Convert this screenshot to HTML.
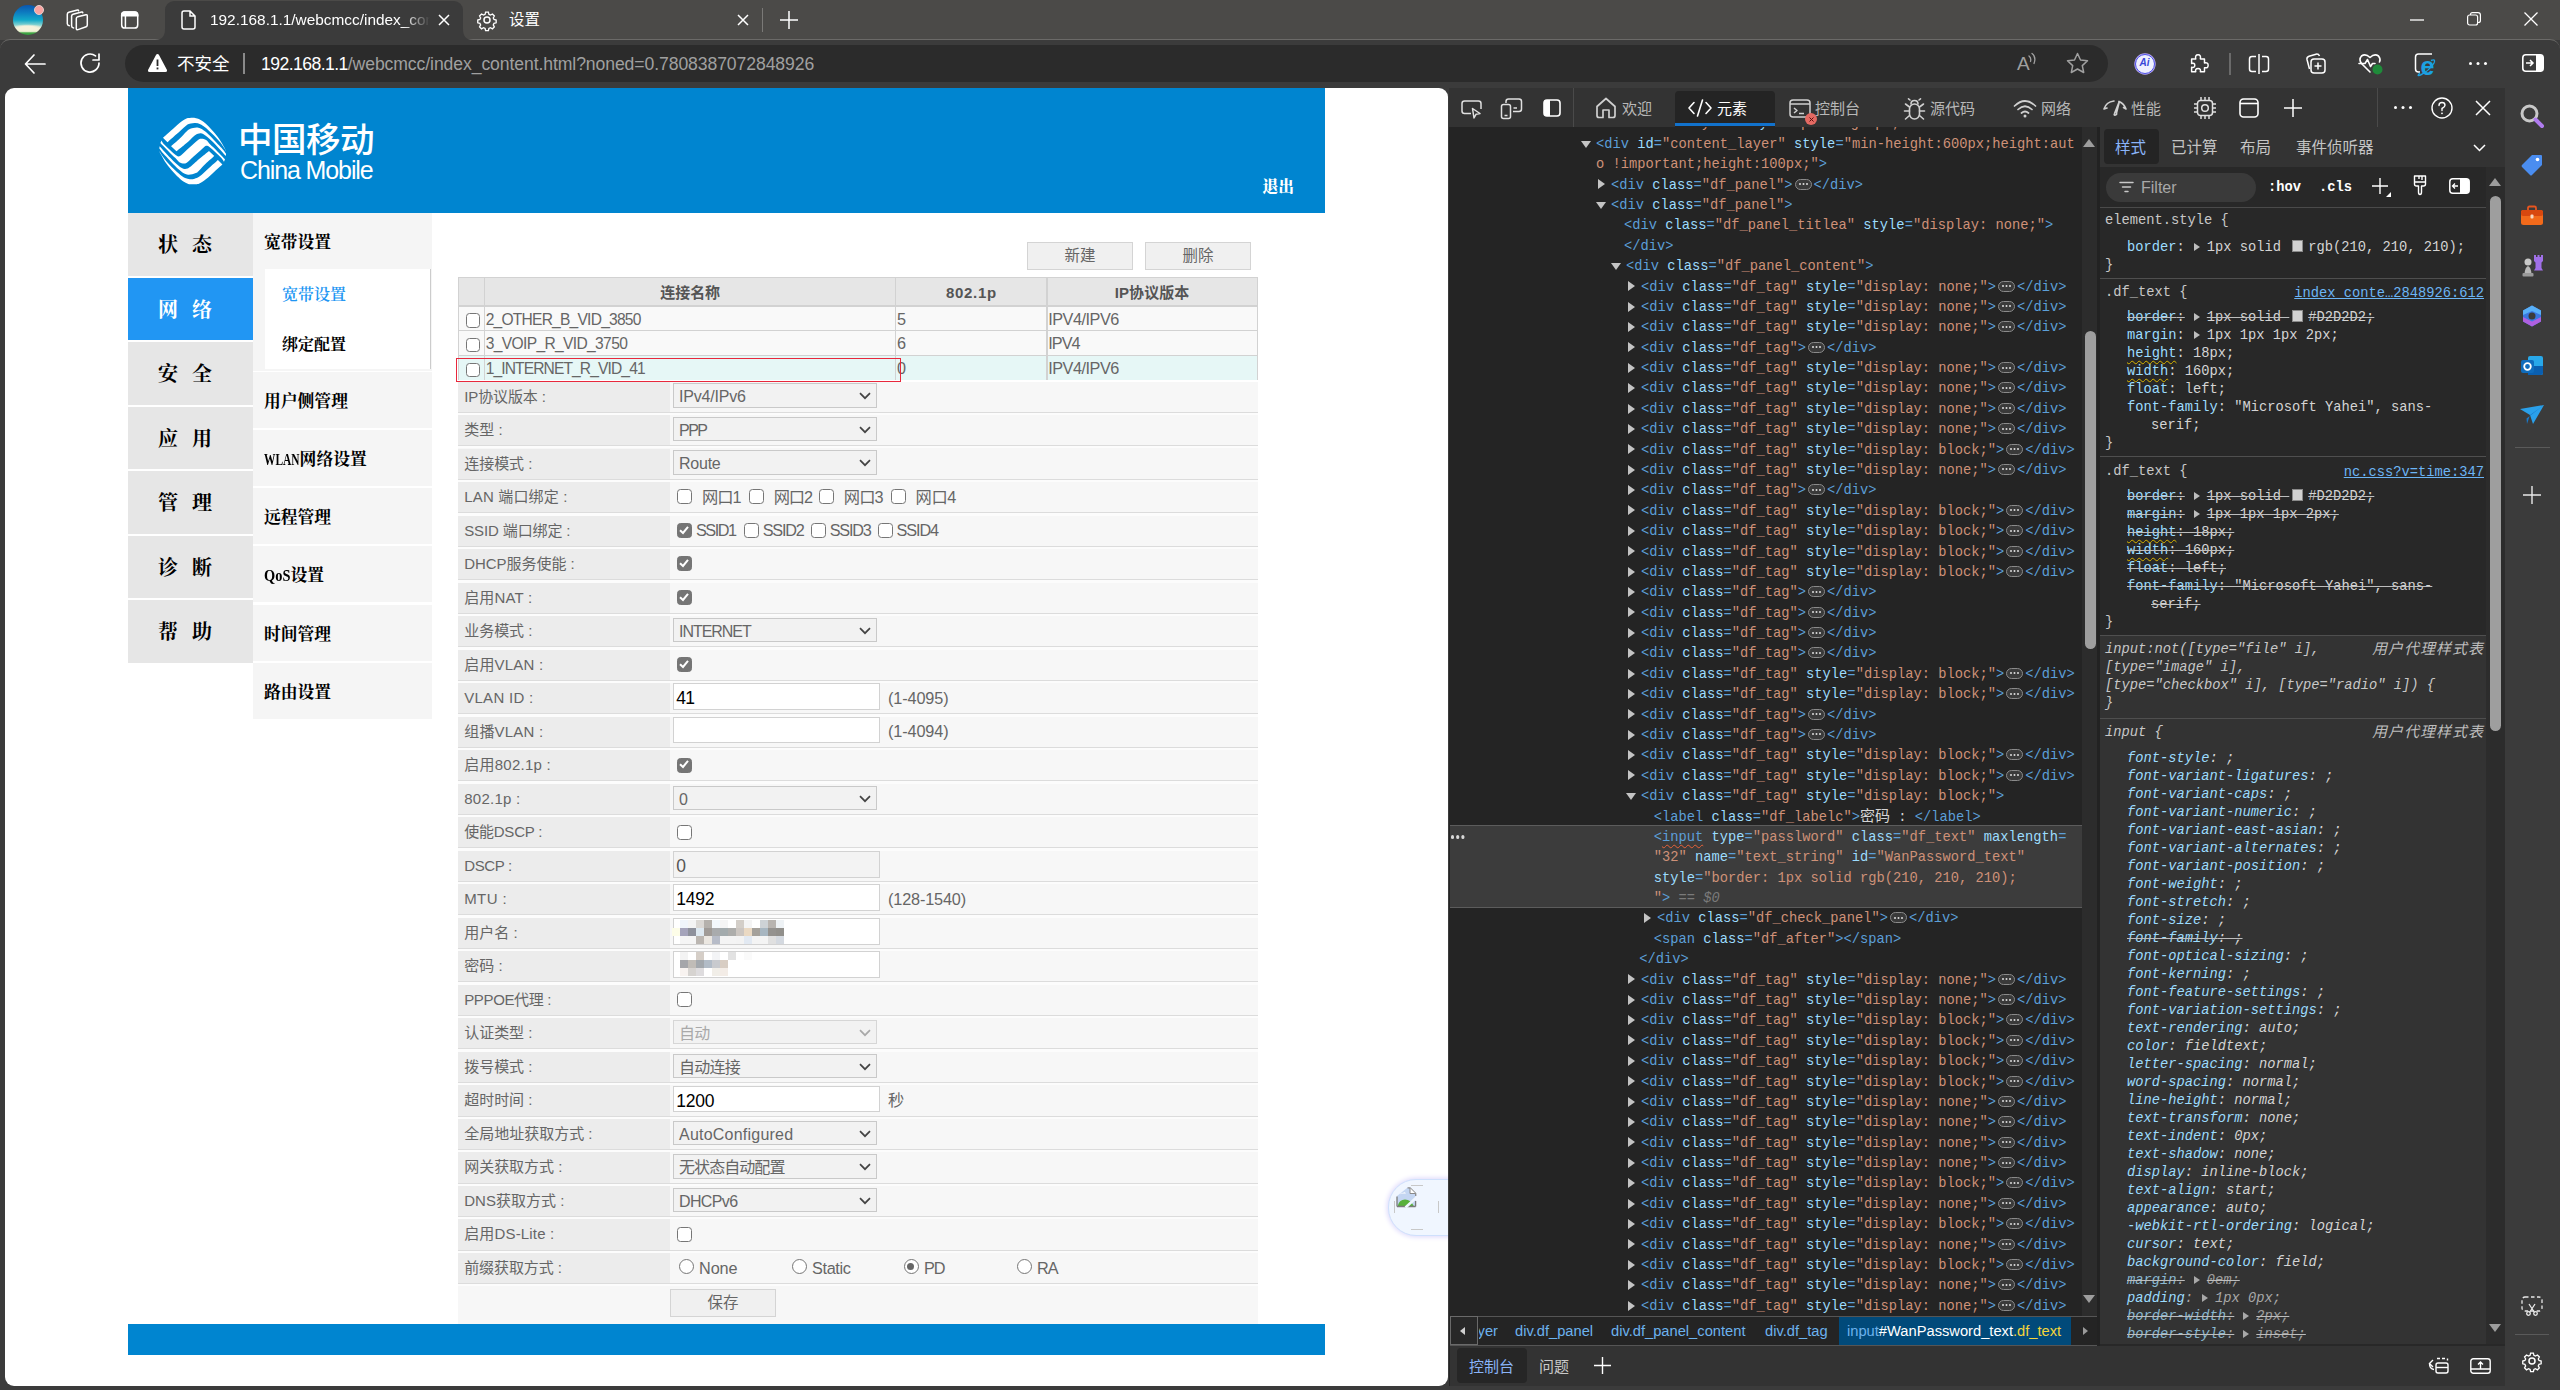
<!DOCTYPE html><html lang="zh-CN"><head><meta charset="utf-8"><title>192.168.1.1/webcmcc/index_content.html</title><style>
*{box-sizing:border-box;margin:0;padding:0}
html,body{width:2560px;height:1390px;overflow:hidden;background:#3b3b3b}
body{position:relative;font-family:"Liberation Sans","Noto Sans CJK SC",sans-serif;font-size:15px;color:#fff}
.abs{position:absolute}
svg{position:absolute;overflow:visible}
/* ---------- browser chrome ---------- */
#titlebar{left:0;top:0;width:2560px;height:40px;background:#4b4a48}
#toolbar{left:0;top:39px;width:2560px;height:49px;background:#3b3b3b;border-top:1px solid #6b6a68;border-top-left-radius:10px;border-top-right-radius:10px}
#tab1{left:165px;top:1px;width:298px;height:39px;background:#3b3b3b;border-radius:9px 9px 0 0}
.tabt{font-size:15.4px;color:#fff;white-space:nowrap}
#addr{left:125px;top:45px;width:1983px;height:37px;border-radius:19px;background:#2b2b2b}
.url{font-size:17.6px;white-space:nowrap;top:53px;line-height:22px}
/* ---------- web page ---------- */
#page{left:5px;top:88px;width:1443px;height:1298px;background:#fff;border-radius:9px 9px 9px 9px;overflow:hidden}
#hdr{left:123px;top:0;width:1197px;height:125px;background:#0085d0}
.serif{font-family:"Liberation Serif","Noto Serif CJK SC",serif;font-weight:700}
.nav{left:123px;width:125px;height:62.5px;background:#e6e6e6;color:#000;font-size:20px;text-align:left;padding-left:30px;line-height:64.500px;white-space:pre}
.sub{left:248px;width:179px;height:56px;background:#f5f5f5;color:#000;font-size:16.8px;line-height:59px;padding-left:11px;white-space:nowrap}
.row{left:453px;width:799.6px;height:31.3px;background:#f7f7f7;border-bottom:1px solid #dcdcdc}
.row .lab{position:absolute;left:0;top:0;width:212px;height:30.3px;background:#ececec;color:#666;font-size:15px;line-height:30px;padding-left:6.2px;white-space:nowrap}
.t{color:#666;font-size:16.2px;white-space:nowrap;line-height:20px}
.sel{position:absolute;left:215px;top:1.9px;width:204px;height:24.4px;border:1px solid #c9c9c9;background:#f2f2f2;color:#666;font-size:16.2px;line-height:24px;padding-left:5px;white-space:nowrap}
.sel.dis{color:#a9a9a9;border-color:#d6d6d6}
.inp{position:absolute;left:214.8px;top:0.3px;width:207px;height:26.6px;border:1px solid #d2d2d2;background:#fff;color:#000;font-size:17.5px;line-height:28px;padding-left:2.5px;white-space:nowrap}
.cb{position:absolute;width:15px;height:15px;border:1.6px solid #767676;border-radius:3.5px;background:#fff}
.cb.on{background:#757575;border-color:#757575}
.rd{position:absolute;width:15px;height:15px;border:1.6px solid #767676;border-radius:50%;background:#fff}
.btn{background:#f0f0f0;border:1px solid #d4d4d4;color:#666;font-size:15.5px;text-align:center;line-height:25px;height:27.5px}
/* ---------- devtools ---------- */
#dt{left:1450px;top:88px;width:1055px;height:1298px;background:#282828;overflow:hidden}
.mono{font-family:"Liberation Mono","Noto Sans CJK SC",monospace;font-size:13.75px;white-space:pre}
.ln{position:absolute;height:20.4px;line-height:20.4px}
.tg{color:#5c9fd8}.an{color:#9cdcfe}.av{color:#ce9178}.tx{color:#d4d4d4}
.ar{position:absolute;width:0;height:0}
.el{display:inline-block;width:17px;height:11px;border:1px solid #8a8a8a;border-radius:6px;background:#3a3a3a;vertical-align:-1px;margin:0 2px;position:relative}
.el:after{content:"";position:absolute;left:3px;top:3.5px;width:2px;height:2px;background:#ddd;box-shadow:3.5px 0 0 #ddd,7px 0 0 #ddd;border-radius:1px}
.sl{position:absolute;height:18px;line-height:18px}
.pn{color:#9cdcfe}.pv{color:#d4d4d4}.sc{color:#c8c8c8}
.ua{font-style:italic}
.st{text-decoration:line-through;text-decoration-color:#bdbdbd}
.dtab{position:absolute;top:8.600px;height:24px;line-height:24px;font-size:15px;color:#b8b8b8;white-space:nowrap}
</style></head><body>
<div class="abs" id="titlebar"></div>
<div class="abs" id="toolbar"></div>
<div class="abs" id="tab1"></div>
<svg style="left:155px;top:29px" width="10" height="11"><path d="M0 11 Q10 11 10 0 V11Z" fill="#3b3b3b"/></svg>
<svg style="left:463px;top:29px" width="10" height="11"><path d="M10 11 Q0 11 0 0 V11Z" fill="#3b3b3b"/></svg>
<div class="abs" style="left:12.800px;top:4.700px;width:30.400px;height:30.600px;border-radius:50%;background:radial-gradient(ellipse 55% 13% at 48% 77%,#f7f2dc 0,#f7f2dc 50%,rgba(247,242,220,0) 100%),linear-gradient(180deg,#0b55ae 0%,#0d7cc0 25%,#12a9c9 50%,#7fd0d0 66%,#f3efd8 78%,#e9f0cf 88%,#44a646 93%,#2f9a3c 100%)"></div>
<div class="abs" style="left:33.900px;top:4.900px;width:10.200px;height:10.200px;border-radius:50%;background:#f9a3a1;border:0.800px solid #e8d0cc"></div>
<svg style="left:66px;top:9px" width="24" height="23" viewBox="0 0 24 23" fill="none" stroke="#fff" stroke-width="1.500" stroke-linecap="round" stroke-linejoin="round"><path d="M11.800 7.700 L19.900 5.700 Q21.300 5.400 21.300 6.900 L21.300 16.100 Q21.300 17.300 20.200 17.700 L12 20.600 Q10.300 21.100 10.300 19.600 L10.300 9.400 Q10.300 8.100 11.800 7.700Z"/><path d="M16.800 3.700 Q16.600 2.900 15.700 3.100 L7 5.200 Q5.600 5.600 5.600 7 L5.600 17 Q5.600 18.700 7.600 18.900"/><path d="M12.600 1.700 Q12.400 0.900 11.500 1.100 L2.800 3.300 Q1.300 3.700 1.300 5.200 L1.300 14.800 Q1.300 16.400 3.300 16.700"/></svg>
<svg style="left:120px;top:10px" width="20" height="20" viewBox="0 0 20 20"><rect x="1.700" y="1.900" width="16" height="16.200" rx="3.200" fill="none" stroke="#fff" stroke-width="1.500"/><path d="M1.700 5.800 V5 Q1.700 1.900 4.800 1.900 H14.600 Q17.700 1.900 17.700 5 V5.800Z" fill="#fff" stroke="#fff" stroke-width="1.500"/><path d="M5.400 5.800 V18" stroke="#fff" stroke-width="1.500"/></svg>
<svg style="left:181px;top:10px" width="15" height="20" viewBox="0 0 15 20" fill="none" stroke="#fff" stroke-width="1.5"><path d="M3 1 H9 L14 6 V17 Q14 19 12 19 H3 Q1 19 1 17 V3 Q1 1 3 1Z M9 1 V6 H14"/></svg>
<div class="abs tabt" style="left:210px;top:10px;width:220px;overflow:hidden;line-height:20px;-webkit-mask-image:linear-gradient(90deg,#000 88%,transparent 100%);mask-image:linear-gradient(90deg,#000 88%,transparent 100%)">192.168.1.1/webcmcc/index_content.html</div>
<svg style="left:438px;top:14px" width="12" height="12" viewBox="0 0 12 12" stroke="#fff" stroke-width="1.5"><path d="M1 1 L11 11 M11 1 L1 11"/></svg>
<svg style="left:476px;top:9px" width="22" height="22" viewBox="0 0 24 24" fill="none" stroke="#fff" stroke-width="1.6"><circle cx="12" cy="12" r="3.3"/><path d="M10.3 2.5h3.4l.6 2.6 1.9.9 2.4-1.3 2.3 2.4-1.300 2.400.9 1.900 2.600.600v3.400l-2.600.600-.900 1.900 1.300 2.400-2.300 2.400-2.400-1.300-1.900.900-.600 2.600h-3.400l-.600-2.600-1.900-.900-2.400 1.300-2.400-2.400 1.300-2.400-.900-1.900-2.600-.600v-3.400l2.600-.600.900-1.900-1.300-2.400 2.400-2.400 2.400 1.300 1.900-.900z" transform="translate(1.2 1.2) scale(0.9)"/></svg>
<div class="abs tabt" style="left:509px;top:10px;line-height:20px">设置</div>
<svg style="left:737px;top:14px" width="12" height="12" viewBox="0 0 12 12" stroke="#fff" stroke-width="1.5"><path d="M1 1 L11 11 M11 1 L1 11"/></svg>
<div class="abs" style="left:762px;top:8px;width:1px;height:24px;background:#7a7977"></div>
<svg style="left:780px;top:11px" width="18" height="18" viewBox="0 0 18 18" stroke="#fff" stroke-width="1.5"><path d="M9 0 V18 M0 9 H18"/></svg>
<svg style="left:2410px;top:19px" width="14" height="2"><path d="M0 1 H14" stroke="#fff" stroke-width="1.3"/></svg>
<svg style="left:2467px;top:12px" width="14" height="14" viewBox="0 0 14 14" fill="none" stroke="#fff" stroke-width="1.2"><rect x="0.6" y="3" width="10" height="10" rx="2"/><path d="M3.5 3 V2.6 Q3.5 0.6 5.5 0.6 H11 Q13.400 0.600 13.400 3 V8.500 Q13.400 10.500 11.400 10.500 H10.600"/></svg>
<svg style="left:2524px;top:12px" width="14" height="14" viewBox="0 0 14 14" stroke="#fff" stroke-width="1.3"><path d="M0.5 0.5 L13.5 13.5 M13.5 0.5 L0.5 13.5"/></svg>
<svg style="left:24px;top:54px" width="22" height="20" viewBox="0 0 22 20" fill="none" stroke="#fff" stroke-width="1.7" stroke-linecap="round" stroke-linejoin="round"><path d="M10 1 L1.500 10 L10 19 M2 10 H21"/></svg>
<svg style="left:79px;top:52px" width="22" height="22" viewBox="0 0 22 22" fill="none" stroke="#fff" stroke-width="1.7" stroke-linecap="round" stroke-linejoin="round"><path d="M20 11 A9 9 0 1 1 16.500 3.900 M20 2 V8 H14" transform="translate(0 0)"/></svg>
<div class="abs" id="addr"></div>
<svg style="left:147px;top:53px" width="21" height="20" viewBox="0 0 21 20"><path d="M10.500 1 Q11.500 1 12 2 L20 17 Q20.600 19 18.500 19 H2.500 Q0.400 19 1 17 L9 2 Q9.500 1 10.500 1Z" fill="#fff"/><rect x="9.600" y="6.500" width="1.800" height="6.500" fill="#2b2b2b"/><rect x="9.600" y="14.500" width="1.800" height="1.900" fill="#2b2b2b"/></svg>
<div class="abs url" style="left:177px;color:#fff;font-size:17.5px">不安全</div>
<div class="abs" style="left:243px;top:53px;width:1.500px;height:21px;background:#8a8a8a"></div>
<div class="abs url" style="left:261px"><span style="color:#fff;letter-spacing:-0.56px">192.168.1.1</span><span style="color:#a0a0a0;letter-spacing:-0.09px">/webcmcc/index_content.html?noned=0.7808387072848926</span></div>
<div class="abs" style="left:2017px;top:52px;font-size:19px;color:#a0a0a0;line-height:24px;font-family:'Liberation Sans',sans-serif">A</div>
<svg style="left:2028px;top:52px" width="12" height="14" viewBox="0 0 12 14" fill="none" stroke="#a0a0a0" stroke-width="1.3" stroke-linecap="round"><path d="M1 4 Q3.500 6 2.500 9.500 M4 1.500 Q8.500 5 6 11.500"/></svg>
<svg style="left:2066px;top:52px" width="23" height="22" viewBox="0 0 23 22" fill="none" stroke="#a0a0a0" stroke-width="1.5" stroke-linejoin="round"><path d="M11.500 1.500 L14.500 8 L21.500 8.800 L16.300 13.600 L17.700 20.500 L11.500 17 L5.300 20.500 L6.700 13.600 L1.500 8.800 L8.500 8Z"/></svg>
<div class="abs" style="left:2134.500px;top:54px;width:20px;height:20px;border-radius:50%;background:#eef0ff;border:1.800px solid #4b50e6;box-shadow:0 0 0 0.700px #b9a8f5;color:#3847d8;font-size:10px;font-weight:bold;text-align:center;line-height:16px;font-style:italic">Ai</div>
<svg style="left:2187px;top:52px" width="24" height="24" viewBox="0 0 24 24" fill="none" stroke="#fff" stroke-width="1.600" stroke-linejoin="round"><path d="M4 7.500 H8.500 Q7.500 3 11 3 Q14.500 3 13.500 7.500 H18 V12 Q22 11 22 14.500 Q22 18 18 17 V21.500 H13.500 Q14.500 18 11 18 Q7.500 18 8.500 21.500 H4 V16.500 Q7.500 17.500 7.500 14.500 Q7.500 11.500 4 12.500Z" transform="scale(0.92) translate(1 0)"/></svg>
<div class="abs" style="left:2229px;top:53px;width:1.500px;height:22px;background:#6a6a6a"></div>
<svg style="left:2248px;top:53px" width="22" height="22" viewBox="0 0 22 22" fill="none" stroke="#fff" stroke-width="1.500"><path d="M8 3.500 H4 Q1.500 3.500 1.500 6 V16 Q1.500 18.500 4 18.500 H8 M14 3.500 H18 Q20.500 3.500 20.500 6 V16 Q20.500 18.500 18 18.500 H14 M11 1 V21"/></svg>
<svg style="left:2304px;top:52px" width="23" height="23" viewBox="0 0 23 23" fill="none" stroke="#fff" stroke-width="1.500"><rect x="7" y="7" width="14" height="14" rx="3"/><path d="M14 10.500 V17.500 M10.500 14 H17.500"/><path d="M5.500 17 L3 7.500 Q2.500 5 5 4.200 L12 2.200 Q14.500 1.700 15.500 4"/></svg>
<svg style="left:2358px;top:52px" width="26" height="24" viewBox="0 0 26 24" fill="none" stroke="#fff" stroke-width="1.600" stroke-linejoin="round" stroke-linecap="round"><path d="M12 20 L3.500 11.500 Q0.500 7.500 3.500 4 Q7.500 1 12 5.500 Q16.500 1 20.500 4 Q23 7 21.500 10"/><path d="M1 11.500 H7 L9.500 7.500 L12.500 14.500 L14.500 11.500 H17"/><circle cx="19.500" cy="17.500" r="5" fill="#1f8a3a" stroke="none"/></svg>
<svg style="left:2412px;top:52px" width="28" height="26" viewBox="0 0 28 26" fill="none"><path d="M20 2 H6.500 Q3.500 2 3.500 5 V17 Q3.500 20 6.500 20 H8" stroke="#fff" stroke-width="1.500"/><text x="8.500" y="23" font-family="Liberation Sans,sans-serif" font-size="25" font-weight="bold" fill="#1ba1e2">e</text><path d="M8 21 Q4 24.500 8.500 23 Q17 19 22 11 Q24 6.500 19 8.500" stroke="#1ba1e2" stroke-width="1.400"/></svg>
<div class="abs" style="left:2469px;top:62px;width:3.400px;height:3.400px;border-radius:50%;background:#fff;box-shadow:7.500px 0 0 #fff,15px 0 0 #fff"></div>
<svg style="left:2522px;top:54px" width="22" height="18" viewBox="0 0 22 18"><rect x="0.800" y="0.800" width="20.400" height="16.400" rx="3" fill="none" stroke="#fff" stroke-width="1.600"/><path d="M14 1 H19 Q21 1 21 3 V15 Q21 17 19 17 H14Z" fill="#fff"/><path d="M4 9 H11 M8 6 L11 9 L8 12" stroke="#fff" stroke-width="1.500" fill="none"/></svg>
<div class="abs" id="page">
<div class="abs" id="hdr"></div>
<svg style="left:149px;top:24px" width="78" height="78" viewBox="0 0 78 78" fill="#fff"><defs><g id="cmfam"><path d="M8.98 25.80 C10.28 24.63 14.09 21.23 16.80 18.80 C19.51 16.37 22.72 13.21 25.25 11.20 C27.78 9.19 30.28 7.61 32.00 6.75 C33.72 5.89 34.06 6.18 35.56 6.04 C37.06 5.90 39.40 5.72 41.02 5.92 C42.64 6.12 43.64 6.37 45.30 7.22 C46.96 8.07 48.86 9.20 51.00 11.02 C53.14 12.84 55.74 15.50 58.12 18.15 C60.49 20.80 63.27 24.12 65.25 26.93 C67.23 29.74 68.86 33.02 70.00 35.00 C71.14 36.98 71.75 38.17 72.10 38.80 L72.00 38.90 C71.59 38.25 70.64 36.60 69.52 35.00 C68.39 33.40 67.15 31.52 65.25 29.31 C63.35 27.09 60.49 24.05 58.12 21.71 C55.74 19.38 52.98 16.88 51.00 15.30 C49.02 13.72 47.83 12.92 46.25 12.21 C44.67 11.50 43.08 11.14 41.50 11.02 C39.92 10.90 38.33 11.06 36.75 11.50 C35.17 11.94 34.39 11.84 32.00 13.64 C29.61 15.44 25.49 19.52 22.40 22.30 C19.31 25.08 14.96 28.97 13.47 30.30Z"/><path d="M17.10 34.20 C18.55 32.92 23.32 28.86 25.80 26.50 C28.28 24.14 30.49 21.56 32.00 20.05 C33.51 18.54 33.66 18.11 34.85 17.44 C36.04 16.77 37.70 16.33 39.12 16.01 C40.54 15.69 42.05 15.42 43.40 15.54 C44.75 15.66 45.93 16.09 47.20 16.72 C48.47 17.35 49.18 17.80 51.00 19.34 C52.82 20.88 55.74 23.61 58.12 25.98 C60.49 28.35 63.35 31.53 65.25 33.58 C67.15 35.63 68.36 36.90 69.50 38.30 C70.64 39.70 71.67 41.38 72.10 42.00 L71.70 43.90 C71.08 43.20 69.35 41.18 68.00 39.70 C66.65 38.22 65.23 36.73 63.58 35.00 C61.93 33.27 59.82 30.97 58.12 29.31 C56.42 27.65 54.79 26.22 53.37 25.03 C51.95 23.84 50.68 22.82 49.57 22.19 C48.46 21.56 47.67 21.32 46.72 21.24 C45.77 21.16 44.82 21.36 43.87 21.71 C42.92 22.07 42.21 22.46 41.02 23.37 C39.83 24.28 38.25 25.82 36.75 27.17 C35.25 28.52 34.38 29.43 32.00 31.45 C29.62 33.47 24.04 37.99 22.45 39.30Z"/></g><path id="cms" d="M7.40 28.40 C7.83 29.04 8.57 30.65 10.00 32.25 C11.43 33.85 14.00 36.16 16.00 38.00 C18.00 39.84 20.55 42.20 21.98 43.26 C23.41 44.32 23.71 44.39 24.57 44.39 C25.43 44.39 25.34 44.72 27.16 43.26 C28.98 41.80 32.64 38.19 35.50 35.60 C38.36 33.01 42.32 29.19 44.33 27.71 C46.34 26.23 46.27 26.68 47.56 26.74 C48.86 26.79 50.73 27.18 52.10 28.04 C53.47 28.90 54.59 30.76 55.75 31.92 C56.91 33.08 57.53 33.49 59.07 35.00 C60.61 36.51 63.01 38.95 65.00 41.00 C66.99 43.05 70.00 46.25 71.00 47.30 L70.00 49.80 C69.57 49.16 68.83 47.55 67.40 45.95 C65.97 44.35 63.40 42.04 61.40 40.20 C59.40 38.37 56.85 36.01 55.42 34.94 C53.99 33.88 53.69 33.81 52.83 33.81 C51.97 33.81 52.06 33.48 50.24 34.94 C48.42 36.41 44.76 40.01 41.90 42.60 C39.04 45.19 35.08 49.01 33.07 50.49 C31.06 51.97 31.14 51.52 29.84 51.46 C28.55 51.41 26.67 51.02 25.30 50.16 C23.94 49.30 22.81 47.44 21.65 46.28 C20.49 45.12 19.87 44.71 18.33 43.20 C16.79 41.69 14.39 39.25 12.40 37.20 C10.41 35.15 7.40 31.95 6.40 30.90Z"/></defs><use href="#cmfam"/><use href="#cms"/><use href="#cmfam" transform="rotate(180 38.7 39.1)"/></svg>
<div class="abs" style="left:233px;top:27px;font-size:34.500px;line-height:44px;color:#fff;font-weight:500;white-space:nowrap;font-family:'Noto Sans CJK SC',sans-serif;letter-spacing:-0.5px">中国移动</div>
<div class="abs" style="left:235px;top:66.500px;line-height:30px;color:#fff;white-space:nowrap"><span style="font-size:25px;font-weight:normal;letter-spacing:-1.110px">China Mobile</span></div>
<div class="abs serif" style="left:1257.500px;top:89px;font-size:15.800px;font-weight:900;line-height:20px;color:#fff;white-space:nowrap">退出</div>
<div class="abs nav serif" style="top:125.0px"><span style="letter-spacing:4.5px">状 态</span></div>
<div class="abs nav serif" style="top:189.5px;background:#2196f3;color:#fff"><span style="letter-spacing:4.5px">网 络</span></div>
<div class="abs nav serif" style="top:254.0px"><span style="letter-spacing:4.5px">安 全</span></div>
<div class="abs nav serif" style="top:318.5px"><span style="letter-spacing:4.5px">应 用</span></div>
<div class="abs nav serif" style="top:383.0px"><span style="letter-spacing:4.5px">管 理</span></div>
<div class="abs nav serif" style="top:447.5px"><span style="letter-spacing:4.5px">诊 断</span></div>
<div class="abs nav serif" style="top:512.0px"><span style="letter-spacing:4.5px">帮 助</span></div>
<div class="abs sub serif" style="top:125px;height:158px"><span>宽带设置</span></div>
<div class="abs" style="left:259.500px;top:181px;width:166px;height:100px;background:#fff;border-right:1px solid #ccc"></div>
<div class="abs serif" style="left:277px;top:194.5px;font-size:16px;line-height:24px;color:#2196f3;white-space:nowrap;font-weight:600">宽带设置</div>
<div class="abs serif" style="left:277px;top:244.5px;font-size:16px;line-height:24px;color:#000;white-space:nowrap">绑定配置</div>
<div class="abs sub serif" style="top:283.5px">用户侧管理</div>
<div class="abs sub serif" style="top:341.75px"><span style="display:inline-block;width:35.6px;white-space:nowrap"><span style="display:inline-block;transform:scaleX(0.68);transform-origin:0 50%">WLAN</span></span>网络设置</div>
<div class="abs sub serif" style="top:400.0px">远程管理</div>
<div class="abs sub serif" style="top:458.25px"><span style="display:inline-block;width:26.4px;white-space:nowrap"><span style="display:inline-block;transform:scaleX(0.857);transform-origin:0 50%">QoS</span></span>设置</div>
<div class="abs sub serif" style="top:516.5px">时间管理</div>
<div class="abs sub serif" style="top:574.75px">路由设置</div>
<div class="abs btn" style="left:1022px;top:154px;width:106px">新建</div>
<div class="abs btn" style="left:1140px;top:154px;width:106px">删除</div>
<div class="abs" style="left:453px;top:294px;width:799.6px;height:942px;background:#f7f7f7"></div>
<div class="abs row" style="top:293.50px"><div class="lab"><span style="font-size:15px;font-weight:normal;letter-spacing:-0.114px">IP协议版本 :</span></div><div class="sel"><span style="font-size:16px;font-weight:normal;letter-spacing:-0.187px">IPv4/IPv6</span><svg style="left:185px;top:8px" width="12" height="8" viewBox="0 0 12 8" fill="none" stroke="#444" stroke-width="1.7"><path d="M1 1.2 L6 6.2 L11 1.2"/></svg></div></div>
<div class="abs" style="left:453px;top:324.80px;width:799.6px;height:2.2px;background:#fcfcfc"></div>
<div class="abs row" style="top:327.01px"><div class="lab"><span style="font-size:15px;font-weight:normal;letter-spacing:0.089px">类型 :</span></div><div class="sel"><span style="font-size:16px;font-weight:normal;letter-spacing:-1.505px">PPP</span><svg style="left:185px;top:8px" width="12" height="8" viewBox="0 0 12 8" fill="none" stroke="#444" stroke-width="1.7"><path d="M1 1.2 L6 6.2 L11 1.2"/></svg></div></div>
<div class="abs" style="left:453px;top:358.31px;width:799.6px;height:2.2px;background:#fcfcfc"></div>
<div class="abs row" style="top:360.52px"><div class="lab"><span style="font-size:15px;font-weight:normal;letter-spacing:-0.024px">连接模式 :</span></div><div class="sel"><span style="font-size:16px;font-weight:normal;letter-spacing:-0.241px">Route</span><svg style="left:185px;top:8px" width="12" height="8" viewBox="0 0 12 8" fill="none" stroke="#444" stroke-width="1.7"><path d="M1 1.2 L6 6.2 L11 1.2"/></svg></div></div>
<div class="abs" style="left:453px;top:391.82px;width:799.6px;height:2.2px;background:#fcfcfc"></div>
<div class="abs row" style="top:394.03px"><div class="lab"><span style="font-size:15px;font-weight:normal;letter-spacing:0.171px">LAN 端口绑定 :</span></div><div class="cb" style="left:219px;top:7.4px"></div><div class="abs t" style="left:243.9px;top:4.8px"><span style="font-size:16.25px;font-weight:normal;letter-spacing:-0.949px">网口1</span></div><div class="cb" style="left:291px;top:7.4px"></div><div class="abs t" style="left:315.7px;top:4.8px"><span style="font-size:16.25px;font-weight:normal;letter-spacing:-1.116px">网口2</span></div><div class="cb" style="left:361px;top:7.4px"></div><div class="abs t" style="left:385.7px;top:4.8px"><span style="font-size:16.25px;font-weight:normal;letter-spacing:-0.782px">网口3</span></div><div class="cb" style="left:433px;top:7.4px"></div><div class="abs t" style="left:457.6px;top:4.8px"><span style="font-size:16.25px;font-weight:normal;letter-spacing:-0.382px">网口4</span></div></div>
<div class="abs" style="left:453px;top:425.33px;width:799.6px;height:2.2px;background:#fcfcfc"></div>
<div class="abs row" style="top:427.54px"><div class="lab"><span style="font-size:15px;font-weight:normal;letter-spacing:-0.120px">SSID 端口绑定 :</span></div><div class="cb on" style="left:219px;top:7.4px"><svg style="left:-0.3px;top:-0.3px" width="12" height="12" viewBox="0 0 12 12" fill="none" stroke="#fff" stroke-width="2"><path d="M2 6.2 L5 9 L10 2.8"/></svg></div><div class="abs t" style="left:238px;top:4.8px"><span style="font-size:16.25px;font-weight:normal;letter-spacing:-1.474px">SSID1</span></div><div class="cb" style="left:285.5px;top:7.4px"></div><div class="abs t" style="left:304.7px;top:4.8px"><span style="font-size:16.25px;font-weight:normal;letter-spacing:-1.194px">SSID2</span></div><div class="cb" style="left:352.6px;top:7.4px"></div><div class="abs t" style="left:371.7px;top:4.8px"><span style="font-size:16.25px;font-weight:normal;letter-spacing:-1.214px">SSID3</span></div><div class="cb" style="left:419.5px;top:7.4px"></div><div class="abs t" style="left:438.5px;top:4.8px"><span style="font-size:16.25px;font-weight:normal;letter-spacing:-1.094px">SSID4</span></div></div>
<div class="abs" style="left:453px;top:458.84px;width:799.6px;height:2.2px;background:#fcfcfc"></div>
<div class="abs row" style="top:461.05px"><div class="lab"><span style="font-size:15px;font-weight:normal;letter-spacing:-0.044px">DHCP服务使能 :</span></div><div class="cb on" style="left:219px;top:7.4px"><svg style="left:-0.3px;top:-0.3px" width="12" height="12" viewBox="0 0 12 12" fill="none" stroke="#fff" stroke-width="2"><path d="M2 6.2 L5 9 L10 2.8"/></svg></div></div>
<div class="abs" style="left:453px;top:492.35px;width:799.6px;height:2.2px;background:#fcfcfc"></div>
<div class="abs row" style="top:494.56px"><div class="lab"><span style="font-size:15px;font-weight:normal;letter-spacing:0.178px">启用NAT :</span></div><div class="cb on" style="left:219px;top:7.4px"><svg style="left:-0.3px;top:-0.3px" width="12" height="12" viewBox="0 0 12 12" fill="none" stroke="#fff" stroke-width="2"><path d="M2 6.2 L5 9 L10 2.8"/></svg></div></div>
<div class="abs" style="left:453px;top:525.86px;width:799.6px;height:2.2px;background:#fcfcfc"></div>
<div class="abs row" style="top:528.07px"><div class="lab"><span style="font-size:15px;font-weight:normal;letter-spacing:-0.024px">业务模式 :</span></div><div class="sel"><span style="font-size:16px;font-weight:normal;letter-spacing:-1.037px">INTERNET</span><svg style="left:185px;top:8px" width="12" height="8" viewBox="0 0 12 8" fill="none" stroke="#444" stroke-width="1.7"><path d="M1 1.2 L6 6.2 L11 1.2"/></svg></div></div>
<div class="abs" style="left:453px;top:559.37px;width:799.6px;height:2.2px;background:#fcfcfc"></div>
<div class="abs row" style="top:561.58px"><div class="lab"><span style="font-size:15px;font-weight:normal;letter-spacing:0.196px">启用VLAN :</span></div><div class="cb on" style="left:219px;top:7.4px"><svg style="left:-0.3px;top:-0.3px" width="12" height="12" viewBox="0 0 12 12" fill="none" stroke="#fff" stroke-width="2"><path d="M2 6.2 L5 9 L10 2.8"/></svg></div></div>
<div class="abs" style="left:453px;top:592.88px;width:799.6px;height:2.2px;background:#fcfcfc"></div>
<div class="abs row" style="top:595.09px"><div class="lab"><span style="font-size:15px;font-weight:normal;letter-spacing:0.290px">VLAN ID :</span></div><div class="inp" style="background:#fff;color:#000"><span style="font-size:17.5px;font-weight:normal;letter-spacing:-0.734px">41</span></div><div class="abs t" style="left:430px;top:4.8px"><span style="font-size:16.25px;font-weight:normal;letter-spacing:-0.115px">(1-4095)</span></div></div>
<div class="abs" style="left:453px;top:626.39px;width:799.6px;height:2.2px;background:#fcfcfc"></div>
<div class="abs row" style="top:628.60px"><div class="lab"><span style="font-size:15px;font-weight:normal;letter-spacing:0.196px">组播VLAN :</span></div><div class="inp" style="background:#fff;color:#000"></div><div class="abs t" style="left:430px;top:4.8px"><span style="font-size:16.25px;font-weight:normal;letter-spacing:-0.115px">(1-4094)</span></div></div>
<div class="abs" style="left:453px;top:659.90px;width:799.6px;height:2.2px;background:#fcfcfc"></div>
<div class="abs row" style="top:662.11px"><div class="lab"><span style="font-size:15px;font-weight:normal;letter-spacing:0.258px">启用802.1p :</span></div><div class="cb on" style="left:219px;top:7.4px"><svg style="left:-0.3px;top:-0.3px" width="12" height="12" viewBox="0 0 12 12" fill="none" stroke="#fff" stroke-width="2"><path d="M2 6.2 L5 9 L10 2.8"/></svg></div></div>
<div class="abs" style="left:453px;top:693.41px;width:799.6px;height:2.2px;background:#fcfcfc"></div>
<div class="abs row" style="top:695.62px"><div class="lab"><span style="font-size:15px;font-weight:normal;letter-spacing:0.260px">802.1p :</span></div><div class="sel"><span style="font-size:16px;font-weight:normal;letter-spacing:-0.406px">0</span><svg style="left:185px;top:8px" width="12" height="8" viewBox="0 0 12 8" fill="none" stroke="#444" stroke-width="1.7"><path d="M1 1.2 L6 6.2 L11 1.2"/></svg></div></div>
<div class="abs" style="left:453px;top:726.92px;width:799.6px;height:2.2px;background:#fcfcfc"></div>
<div class="abs row" style="top:729.13px"><div class="lab"><span style="font-size:15px;font-weight:normal;letter-spacing:-0.219px">使能DSCP :</span></div><div class="cb" style="left:219px;top:7.4px"></div></div>
<div class="abs" style="left:453px;top:760.43px;width:799.6px;height:2.2px;background:#fcfcfc"></div>
<div class="abs row" style="top:762.64px"><div class="lab"><span style="font-size:15px;font-weight:normal;letter-spacing:-0.375px">DSCP :</span></div><div class="inp" style="background:#f3f3f3;color:#555"><span style="font-size:17.5px;font-weight:normal;letter-spacing:-0.234px">0</span></div></div>
<div class="abs" style="left:453px;top:793.94px;width:799.6px;height:2.2px;background:#fcfcfc"></div>
<div class="abs row" style="top:796.15px"><div class="lab"><span style="font-size:15px;font-weight:normal;letter-spacing:0.414px">MTU :</span></div><div class="inp" style="background:#fff;color:#000"><span style="font-size:17.5px;font-weight:normal;letter-spacing:-0.234px">1492</span></div><div class="abs t" style="left:430px;top:4.8px"><span style="font-size:16.25px;font-weight:normal;letter-spacing:-0.150px">(128-1540)</span></div></div>
<div class="abs" style="left:453px;top:827.45px;width:799.6px;height:2.2px;background:#fcfcfc"></div>
<div class="abs row" style="top:829.66px"><div class="lab"><span style="font-size:15px;font-weight:normal;letter-spacing:0.011px">用户名 :</span></div><div class="inp" style="background:#fff;color:#000"></div></div>
<div class="abs" style="left:453px;top:860.96px;width:799.6px;height:2.2px;background:#fcfcfc"></div>
<div class="abs row" style="top:863.17px"><div class="lab"><span style="font-size:15px;font-weight:normal;letter-spacing:0.089px">密码 :</span></div><div class="inp" style="background:#fff;color:#000"></div></div>
<div class="abs" style="left:453px;top:894.47px;width:799.6px;height:2.2px;background:#fcfcfc"></div>
<div class="abs row" style="top:896.68px"><div class="lab"><span style="font-size:15px;font-weight:normal;letter-spacing:-0.359px">PPPOE代理 :</span></div><div class="cb" style="left:219px;top:7.4px"></div></div>
<div class="abs" style="left:453px;top:927.98px;width:799.6px;height:2.2px;background:#fcfcfc"></div>
<div class="abs row" style="top:930.19px"><div class="lab"><span style="font-size:15px;font-weight:normal;letter-spacing:-0.024px">认证类型 :</span></div><div class="sel dis"><span style="font-size:16px;font-weight:normal;letter-spacing:-0.758px">自动</span><svg style="left:185px;top:8px" width="12" height="8" viewBox="0 0 12 8" fill="none" stroke="#a9a9a9" stroke-width="1.7"><path d="M1 1.2 L6 6.2 L11 1.2"/></svg></div></div>
<div class="abs" style="left:453px;top:961.49px;width:799.6px;height:2.2px;background:#fcfcfc"></div>
<div class="abs row" style="top:963.70px"><div class="lab"><span style="font-size:15px;font-weight:normal;letter-spacing:-0.024px">拨号模式 :</span></div><div class="sel"><span style="font-size:16px;font-weight:normal;letter-spacing:-0.754px">自动连接</span><svg style="left:185px;top:8px" width="12" height="8" viewBox="0 0 12 8" fill="none" stroke="#444" stroke-width="1.7"><path d="M1 1.2 L6 6.2 L11 1.2"/></svg></div></div>
<div class="abs" style="left:453px;top:995.00px;width:799.6px;height:2.2px;background:#fcfcfc"></div>
<div class="abs row" style="top:997.21px"><div class="lab"><span style="font-size:15px;font-weight:normal;letter-spacing:-0.024px">超时时间 :</span></div><div class="inp" style="background:#fff;color:#000"><span style="font-size:17.5px;font-weight:normal;letter-spacing:-0.234px">1200</span></div><div class="abs t" style="left:430px;top:4.8px">秒</div></div>
<div class="abs" style="left:453px;top:1028.51px;width:799.6px;height:2.2px;background:#fcfcfc"></div>
<div class="abs row" style="top:1030.72px"><div class="lab"><span style="font-size:15px;font-weight:normal;letter-spacing:-0.004px">全局地址获取方式 :</span></div><div class="sel"><span style="font-size:16px;font-weight:normal;letter-spacing:0.222px">AutoConfigured</span><svg style="left:185px;top:8px" width="12" height="8" viewBox="0 0 12 8" fill="none" stroke="#444" stroke-width="1.7"><path d="M1 1.2 L6 6.2 L11 1.2"/></svg></div></div>
<div class="abs" style="left:453px;top:1062.02px;width:799.6px;height:2.2px;background:#fcfcfc"></div>
<div class="abs row" style="top:1064.23px"><div class="lab"><span style="font-size:15px;font-weight:normal;letter-spacing:-0.030px">网关获取方式 :</span></div><div class="sel"><span style="font-size:16px;font-weight:normal;letter-spacing:-0.931px">无状态自动配置</span><svg style="left:185px;top:8px" width="12" height="8" viewBox="0 0 12 8" fill="none" stroke="#444" stroke-width="1.7"><path d="M1 1.2 L6 6.2 L11 1.2"/></svg></div></div>
<div class="abs" style="left:453px;top:1095.53px;width:799.6px;height:2.2px;background:#fcfcfc"></div>
<div class="abs row" style="top:1097.74px"><div class="lab"><span style="font-size:15px;font-weight:normal;letter-spacing:0.020px">DNS获取方式 :</span></div><div class="sel"><span style="font-size:16px;font-weight:normal;letter-spacing:-0.639px">DHCPv6</span><svg style="left:185px;top:8px" width="12" height="8" viewBox="0 0 12 8" fill="none" stroke="#444" stroke-width="1.7"><path d="M1 1.2 L6 6.2 L11 1.2"/></svg></div></div>
<div class="abs" style="left:453px;top:1129.04px;width:799.6px;height:2.2px;background:#fcfcfc"></div>
<div class="abs row" style="top:1131.25px"><div class="lab"><span style="font-size:15px;font-weight:normal;letter-spacing:0.158px">启用DS-Lite :</span></div><div class="cb" style="left:219px;top:7.4px"></div></div>
<div class="abs" style="left:453px;top:1162.55px;width:799.6px;height:2.2px;background:#fcfcfc"></div>
<div class="abs row" style="top:1164.76px"><div class="lab"><span style="font-size:15px;font-weight:normal;letter-spacing:-0.093px">前缀获取方式 :</span></div><div class="rd" style="left:221px;top:6.5px"></div><div class="abs t" style="left:241px;top:4.8px"><span style="font-size:16.25px;font-weight:normal;letter-spacing:-0.090px">None</span></div><div class="rd" style="left:334px;top:6.5px"></div><div class="abs t" style="left:354px;top:4.8px"><span style="font-size:16.25px;font-weight:normal;letter-spacing:-0.359px">Static</span></div><div class="rd" style="left:446px;top:6.5px"><div class="abs" style="left:2.3px;top:2.3px;width:7.2px;height:7.2px;border-radius:50%;background:#666"></div></div><div class="abs t" style="left:466px;top:4.8px"><span style="font-size:16.25px;font-weight:normal;letter-spacing:-1.039px">PD</span></div><div class="rd" style="left:559px;top:6.5px"></div><div class="abs t" style="left:579px;top:4.8px"><span style="font-size:16.25px;font-weight:normal;letter-spacing:-1.039px">RA</span></div></div>
<div class="abs" style="left:453px;top:1196.06px;width:799.6px;height:2.2px;background:#fcfcfc"></div>
<div class="abs" style="left:453px;top:189.3px;width:799.6px;height:103.2px;background:#d2d2d2"></div>
<div class="abs" style="left:454px;top:190.3px;width:25px;height:27.2px;background:#e6e6e6;color:#555;text-align:center;line-height:29px;white-space:nowrap"></div>
<div class="abs" style="left:480px;top:190.3px;width:410.3px;height:27.2px;background:#e6e6e6;color:#555;text-align:center;line-height:29px;white-space:nowrap"><span style="font-size:15px;font-weight:bold;letter-spacing:-0.054px">连接名称</span></div>
<div class="abs" style="left:891.3px;top:190.3px;width:150.2px;height:27.2px;background:#e6e6e6;color:#555;text-align:center;line-height:29px;white-space:nowrap"><span style="font-size:15px;font-weight:bold;letter-spacing:0.649px">802.1p</span></div>
<div class="abs" style="left:1042.5px;top:190.3px;width:209.1px;height:27.2px;background:#e6e6e6;color:#555;text-align:center;line-height:29px;white-space:nowrap"><span style="font-size:15px;font-weight:bold;letter-spacing:0.052px">IP协议版本</span></div>
<div class="abs t" style="left:454px;top:218.5px;width:25px;height:23.85px;background:#f9f9f9;line-height:24px;padding-left:0.7px"></div>
<div class="abs t" style="left:480px;top:218.5px;width:410.3px;height:23.85px;background:#f9f9f9;line-height:24px;padding-left:0.7px"><span style="font-size:15.6px;font-weight:normal;letter-spacing:-0.785px">2_OTHER_B_VID_3850</span></div>
<div class="abs t" style="left:891.3px;top:218.5px;width:150.2px;height:23.85px;background:#f9f9f9;line-height:24px;padding-left:0.7px"><span style="font-size:16.25px">5</span></div>
<div class="abs t" style="left:1042.5px;top:218.5px;width:209.1px;height:23.85px;background:#f9f9f9;line-height:24px;padding-left:0.7px"><span style="font-size:16.25px;font-weight:normal;letter-spacing:-0.476px">IPV4/IPV6</span></div>
<div class="cb" style="left:460.5px;top:225.1px;width:14.5px;height:14.5px"></div>
<div class="abs t" style="left:454px;top:243.35px;width:25px;height:23.85px;background:#f9f9f9;line-height:24px;padding-left:0.7px"></div>
<div class="abs t" style="left:480px;top:243.35px;width:410.3px;height:23.85px;background:#f9f9f9;line-height:24px;padding-left:0.7px"><span style="font-size:15.6px;font-weight:normal;letter-spacing:-0.652px">3_VOIP_R_VID_3750</span></div>
<div class="abs t" style="left:891.3px;top:243.35px;width:150.2px;height:23.85px;background:#f9f9f9;line-height:24px;padding-left:0.7px"><span style="font-size:16.25px">6</span></div>
<div class="abs t" style="left:1042.5px;top:243.35px;width:209.1px;height:23.85px;background:#f9f9f9;line-height:24px;padding-left:0.7px"><span style="font-size:16.25px;font-weight:normal;letter-spacing:-0.934px">IPV4</span></div>
<div class="cb" style="left:460.5px;top:249.95px;width:14.5px;height:14.5px"></div>
<div class="abs t" style="left:454px;top:268.2px;width:25px;height:23.85px;background:#e6f7f6;line-height:24px;padding-left:0.7px"></div>
<div class="abs t" style="left:480px;top:268.2px;width:410.3px;height:23.85px;background:#e6f7f6;line-height:24px;padding-left:0.7px"><span style="font-size:15.6px;font-weight:normal;letter-spacing:-0.891px">1_INTERNET_R_VID_41</span></div>
<div class="abs t" style="left:891.3px;top:268.2px;width:150.2px;height:23.85px;background:#e6f7f6;line-height:24px;padding-left:0.7px"><span style="font-size:16.25px">0</span></div>
<div class="abs t" style="left:1042.5px;top:268.2px;width:209.1px;height:23.85px;background:#e6f7f6;line-height:24px;padding-left:0.7px"><span style="font-size:16.25px;font-weight:normal;letter-spacing:-0.476px">IPV4/IPV6</span></div>
<div class="cb" style="left:460.5px;top:274.8px;width:14.5px;height:14.5px"></div>
<div class="abs" style="left:451px;top:270.3px;width:445px;height:23.6px;border:1.5px solid #e8283c"></div>
<svg style="left:667px;top:832px" width="120" height="24" viewBox="0 0 120 24" shape-rendering="crispEdges"><rect x="8" y="0" width="8" height="8" fill="#f0f5fb"/><rect x="16" y="0" width="8" height="8" fill="#f4f4f4"/><rect x="24" y="0" width="8" height="8" fill="#dbd8d4"/><rect x="32" y="0" width="8" height="8" fill="#b5b1ac"/><rect x="40" y="0" width="8" height="8" fill="#f3f8fc"/><rect x="48" y="0" width="8" height="8" fill="#f5f5f5"/><rect x="56" y="0" width="8" height="8" fill="#ffffff"/><rect x="64" y="0" width="8" height="8" fill="#d3cec8"/><rect x="72" y="0" width="8" height="8" fill="#f4f4f4"/><rect x="80" y="0" width="8" height="8" fill="#ffffff"/><rect x="88" y="0" width="8" height="8" fill="#cdd2d6"/><rect x="96" y="0" width="8" height="8" fill="#b8b4b0"/><rect x="104" y="0" width="8" height="8" fill="#eef2f5"/><rect x="0" y="8" width="8" height="8" fill="#fdfde8"/><rect x="8" y="8" width="8" height="8" fill="#a5a4bb"/><rect x="16" y="8" width="8" height="8" fill="#8e919c"/><rect x="24" y="8" width="8" height="8" fill="#dde8f0"/><rect x="32" y="8" width="8" height="8" fill="#a09b97"/><rect x="40" y="8" width="8" height="8" fill="#a9abad"/><rect x="48" y="8" width="8" height="8" fill="#a3abad"/><rect x="56" y="8" width="8" height="8" fill="#adadab"/><rect x="64" y="8" width="8" height="8" fill="#ccc6c1"/><rect x="72" y="8" width="8" height="8" fill="#ead9c3"/><rect x="80" y="8" width="8" height="8" fill="#a5a19b"/><rect x="88" y="8" width="8" height="8" fill="#a7b6c1"/><rect x="96" y="8" width="8" height="8" fill="#94928f"/><rect x="104" y="8" width="8" height="8" fill="#918f8b"/><rect x="8" y="16" width="8" height="8" fill="#f5f5f5"/><rect x="16" y="16" width="8" height="8" fill="#f5f5f5"/><rect x="24" y="16" width="8" height="8" fill="#bbb6b1"/><rect x="32" y="16" width="8" height="8" fill="#ebe7e1"/><rect x="40" y="16" width="8" height="8" fill="#b7bcc8"/><rect x="48" y="16" width="8" height="8" fill="#f4f4f4"/><rect x="56" y="16" width="8" height="8" fill="#f4f4f4"/><rect x="64" y="16" width="8" height="8" fill="#f3f3f3"/><rect x="72" y="16" width="8" height="8" fill="#e2e9f2"/><rect x="80" y="16" width="8" height="8" fill="#f4f4f4"/><rect x="88" y="16" width="8" height="8" fill="#f4f4f4"/><rect x="96" y="16" width="8" height="8" fill="#e0e0e0"/><rect x="104" y="16" width="8" height="8" fill="#d4d9e0"/></svg>
<svg style="left:667px;top:864px" width="120" height="24" viewBox="0 0 120 24" shape-rendering="crispEdges"><rect x="8" y="0" width="8" height="8" fill="#f3f3f3"/><rect x="16" y="0" width="8" height="8" fill="#ffffff"/><rect x="24" y="0" width="8" height="8" fill="#d5cec7"/><rect x="32" y="0" width="8" height="8" fill="#ffffff"/><rect x="40" y="0" width="8" height="8" fill="#f3f4f6"/><rect x="48" y="0" width="8" height="8" fill="#ffffff"/><rect x="56" y="0" width="8" height="8" fill="#e2e2e2"/><rect x="64" y="0" width="8" height="8" fill="#ffffff"/><rect x="72" y="0" width="8" height="8" fill="#fafafa"/><rect x="8" y="8" width="8" height="8" fill="#a5a6aa"/><rect x="16" y="8" width="8" height="8" fill="#c0bcb7"/><rect x="24" y="8" width="8" height="8" fill="#a3a8ad"/><rect x="32" y="8" width="8" height="8" fill="#b2bcc7"/><rect x="40" y="8" width="8" height="8" fill="#c8cace"/><rect x="48" y="8" width="8" height="8" fill="#d8cdc3"/><rect x="8" y="16" width="8" height="8" fill="#f8f3f0"/><rect x="16" y="16" width="8" height="8" fill="#d6d3d0"/><rect x="24" y="16" width="8" height="8" fill="#dedcde"/><rect x="32" y="16" width="8" height="8" fill="#ffffff"/><rect x="40" y="16" width="8" height="8" fill="#f1eee8"/><rect x="48" y="16" width="8" height="8" fill="#f3ece6"/></svg>
<div class="abs btn" style="left:665px;top:1201.1px;width:106px">保存</div>
<div class="abs" style="left:123px;top:1236px;width:1197px;height:31px;background:#0085d0"></div>
<div class="abs" style="left:1382.600px;top:1091px;width:130px;height:56.500px;border-radius:28px;background:#f0f6ff;border:1.500px solid #cfe0fc;box-shadow:0 0 5px 1px #dcd8fb"></div>
<svg style="left:1391px;top:1098.500px" width="21" height="21" viewBox="0 0 21 21"><path d="M1 19.500 V9 L11 1 H14 L19.500 6.500 V19.500Z" fill="#c4d6f2"/><path d="M11.500 0.800 H14 L19.700 6.500 V9" fill="none" stroke="#8a8a8a" stroke-width="1.300"/><path d="M14 1 V6.500 H19.500" fill="#fff" stroke="#8a8a8a" stroke-width="1"/><path d="M4 7.500 Q5 5 7 6 Q8.500 4.500 10 6.500 H4Z" fill="#fff"/><path d="M1.500 19.500 Q3 12.500 9 12.500 Q15 12.500 18 19.500Z" fill="#58b03c"/><path d="M1 19.500 V9.500 M19.600 14 V19.500 M1 19.500 H19.600" stroke="#7a7a7a" stroke-width="1.300" fill="none"/><path d="M9.500 20.500 L21 10" stroke="#f0f6ff" stroke-width="2.600"/></svg>
<div class="abs" style="left:1389.300px;top:1113px;width:1px;height:12px;background:#c8c8c8"></div>
<div class="abs" style="left:1433.300px;top:1113px;width:1px;height:12px;background:#c8c8c8"></div>
<div class="abs" style="left:1405.500px;top:1097px;width:12px;height:1px;background:#c8c8c8"></div>
<div class="abs" style="left:1405.500px;top:1141px;width:12px;height:1px;background:#c8c8c8"></div>
</div><div class="abs" style="left:1449px;top:88px;width:1px;height:39px;background:#333"></div><div class="abs" style="left:1449px;top:127px;width:1px;height:1259px;background:#242424"></div>
<div class="abs" id="dt">
<div class="abs" style="left:0;top:0;width:1055px;height:39px;background:#333"></div>
<div class="abs" style="left:123px;top:0;width:1px;height:39px;background:#4a4a4a"></div>
<div class="abs" style="left:927px;top:0;width:1px;height:39px;background:#4a4a4a"></div>
<svg style="left:11px;top:12px" width="22" height="20" viewBox="0 0 22 20" fill="none" stroke="#e0e0e0" stroke-width="1.500" stroke-linejoin="round"><path d="M10 13.500 H3.500 Q1 13.500 1 11 V3.500 Q1 1 3.500 1 H17.500 Q20 1 20 3.500 V9"/><path d="M11.500 8.500 L19 13.500 L15 14.300 L13 18Z"/></svg>
<svg style="left:50px;top:10px" width="23" height="22" viewBox="0 0 23 22" fill="none" stroke="#e0e0e0" stroke-width="1.500"><path d="M6 5 V3.500 Q6 1 8.500 1 H19 Q21.500 1 21.500 3.500 V11 Q21.500 13.500 19 13.500 H13"/><rect x="1.500" y="6.500" width="9" height="14" rx="2"/><path d="M4.500 17.500 H7.500 M13.500 10 H17"/></svg>
<svg style="left:93px;top:11px" width="18" height="18" viewBox="0 0 18 18"><rect x="1" y="1" width="16" height="16" rx="3" fill="none" stroke="#fff" stroke-width="1.600"/><path d="M3 1 H7 V17 H3 Q1 17 1 15 V3 Q1 1 3 1Z" fill="#fff"/></svg>
<svg style="left:145px;top:9px" width="22" height="22" viewBox="0 0 22 22" fill="none" stroke="#d0d0d0" stroke-width="1.700" stroke-linejoin="round"><path d="M2 9.500 L11 1.500 L20 9.500 V18.500 Q20 20.500 18 20.500 H14 V13 H8 V20.500 H4 Q2 20.500 2 18.500Z"/></svg>
<div class="dtab" style="left:172px">欢迎</div>
<div class="abs" style="left:225px;top:3px;width:100px;height:36px;background:#242424;border-radius:4px 4px 0 0"></div>
<div class="abs" style="left:225px;top:35px;width:100px;height:3px;background:#1272cc"></div>
<svg style="left:238px;top:11px" width="24" height="18" viewBox="0 0 24 18" fill="none" stroke="#fff" stroke-width="1.600" stroke-linecap="round" stroke-linejoin="round"><path d="M6 3.500 L1 9 L6 14.500 M18 3.500 L23 9 L18 14.500 M14.500 1 L9.500 17"/></svg>
<div class="dtab" style="left:267px;color:#fff">元素</div>
<svg style="left:339px;top:11px" width="22" height="20" viewBox="0 0 22 20" fill="none" stroke="#d0d0d0" stroke-width="1.500" stroke-linejoin="round"><rect x="1" y="1" width="20" height="17" rx="3"/><path d="M1 5 H21 M5 9 L8 11.500 L5 14 M10 14.500 H15"/></svg>
<div class="abs" style="left:355px;top:25px;width:12px;height:12px;border-radius:50%;background:#e46962"></div>
<svg style="left:358.500px;top:28.500px" width="5" height="5" viewBox="0 0 5 5" stroke="#5a1010" stroke-width="1"><path d="M0.500 0.500 L4.500 4.500 M4.500 0.500 L0.500 4.500"/></svg>
<div class="dtab" style="left:365px">控制台</div>
<svg style="left:453px;top:9.500px" width="23" height="24" viewBox="0 0 23 24" fill="none" stroke="#d0d0d0" stroke-width="1.600" stroke-linecap="round"><rect x="6.500" y="6" width="10" height="15" rx="5"/><path d="M8 6 Q8 2.500 11.500 2.500 Q15 2.500 15 6 M6.500 13 H1.500 M16.500 13 H21.500 M6.500 9 L2.500 6 M16.500 9 L20.500 6 M6.500 17.500 L2.500 21 M16.500 17.500 L20.500 21 M7 2 L5.500 0.800 M16 2 L17.500 0.800"/></svg>
<div class="dtab" style="left:480px">源代码</div>
<svg style="left:563px;top:11px" width="24" height="19" viewBox="0 0 24 19" fill="none" stroke="#d0d0d0" stroke-width="1.700" stroke-linecap="round"><path d="M1.500 7 Q12 -3 22.500 7 M5 10.500 Q12 4 19 10.500 M8.500 14 Q12 11 15.500 14"/><circle cx="12" cy="17" r="1.500" fill="#d0d0d0" stroke="none"/></svg>
<div class="dtab" style="left:591px">网络</div>
<svg style="left:652px;top:11px" width="26" height="18" viewBox="0 0 26 18" fill="none" stroke="#d0d0d0" stroke-width="1.600" stroke-linecap="round"><path d="M2 10 Q4 3 12 2 M17 2.500 Q22 4.500 24 10 M2 10 L5 9 M24 10 L21.500 8.500"/><path d="M17.500 2 L12.500 14.500 Q11.500 16.500 13.500 16 Q15 15.500 14.500 14Z"/></svg>
<div class="dtab" style="left:681px">性能</div>
<svg style="left:743px;top:8px" width="24" height="24" viewBox="0 0 24 24" fill="none" stroke="#e0e0e0" stroke-width="1.500"><rect x="4.500" y="4.500" width="15" height="15" rx="3"/><circle cx="12" cy="12" r="3.300"/><path d="M8 4.500 V1 M12 4.500 V1 M16 4.500 V1 M8 19.500 V23 M12 19.500 V23 M16 19.500 V23 M4.500 8 H1 M4.500 12 H1 M4.500 16 H1 M19.500 8 H23 M19.500 12 H23 M19.500 16 H23"/></svg>
<svg style="left:789px;top:10px" width="20" height="20" viewBox="0 0 20 20" fill="none" stroke="#fff" stroke-width="1.600"><rect x="1" y="1" width="18" height="18" rx="3.500"/><path d="M1 5.500 H19"/></svg>
<svg style="left:834px;top:11px" width="18" height="18" viewBox="0 0 18 18" stroke="#fff" stroke-width="1.500"><path d="M9 0 V18 M0 9 H18"/></svg>
<div class="abs" style="left:944px;top:18px;width:3.200px;height:3.200px;border-radius:50%;background:#fff;box-shadow:7.500px 0 0 #fff,15px 0 0 #fff"></div>
<svg style="left:981px;top:9px" width="22" height="22" viewBox="0 0 22 22" fill="none" stroke="#fff" stroke-width="1.400"><circle cx="11" cy="11" r="10"/><path d="M8 8.500 Q8 5.500 11 5.500 Q14 5.500 14 8.200 Q14 10 11 11.500 V13.500" stroke-linecap="round"/><circle cx="11" cy="16.300" r="0.900" fill="#fff" stroke="none"/></svg>
<svg style="left:1025px;top:12px" width="16" height="16" viewBox="0 0 16 16" stroke="#fff" stroke-width="1.500"><path d="M1 1 L15 15 M15 1 L1 15"/></svg>
<div class="abs" style="left:0;top:39px;width:632px;height:1189.500px;overflow:hidden;background:#242424">
<div class="abs" style="left:0;top:698.12px;width:632px;height:82.54px;background:#3c3c3c;border-top:1px solid #5c5c5c;border-bottom:1px solid #5c5c5c"></div>
<div class="abs" style="left:0.500px;top:708.12px;width:3.600px;height:3.600px;border-radius:50%;background:#d8d8d8;box-shadow:5.200px 0 0 #d8d8d8,10.400px 0 0 #d8d8d8"></div>
<div class="ln mono" style="left:161px;top:-12.59px"><span class="tg">&lt;div</span> <span class="an">id</span><span class="tg">=</span><span class="av">"layer"</span> <span class="an">style</span><span class="tg">=</span><span class="av">"padding:0px;"</span><span class="tg">&gt;</span></div>
<div class="ln mono" style="left:146px;top:7.80px"><span class="tg">&lt;div</span> <span class="an">id</span><span class="tg">=</span><span class="av">"content_layer"</span> <span class="an">style</span><span class="tg">=</span><span class="av">"min-height:600px;height:aut</span></div>
<div class="ar" style="left:130.5px;top:14.00px;border-top:7.500px solid #c4c4c4;border-left:5.500px solid transparent;border-right:5.500px solid transparent"></div>
<div class="ln mono" style="left:146px;top:28.19px"><span class="av">o !important;height:100px;"</span><span class="tg">&gt;</span></div>
<div class="ln mono" style="left:161px;top:48.57px"><span class="tg">&lt;div</span> <span class="an">class</span><span class="tg">=</span><span class="av">"df_panel"</span><span class="tg">&gt;</span><span class="el"></span><span class="tg">&lt;/div&gt;</span></div>
<div class="ar" style="left:147.5px;top:52.27px;border-left:7.500px solid #c4c4c4;border-top:5px solid transparent;border-bottom:5px solid transparent"></div>
<div class="ln mono" style="left:161px;top:68.96px"><span class="tg">&lt;div</span> <span class="an">class</span><span class="tg">=</span><span class="av">"df_panel"</span><span class="tg">&gt;</span></div>
<div class="ar" style="left:145.5px;top:75.16px;border-top:7.500px solid #c4c4c4;border-left:5.500px solid transparent;border-right:5.500px solid transparent"></div>
<div class="ln mono" style="left:174px;top:89.34px"><span class="tg">&lt;div</span> <span class="an">class</span><span class="tg">=</span><span class="av">"df_panel_titlea"</span> <span class="an">style</span><span class="tg">=</span><span class="av">"display: none;"</span><span class="tg">&gt;</span></div>
<div class="ln mono" style="left:174px;top:109.73px"><span class="tg">&lt;/div&gt;</span></div>
<div class="ln mono" style="left:176px;top:130.12px"><span class="tg">&lt;div</span> <span class="an">class</span><span class="tg">=</span><span class="av">"df_panel_content"</span><span class="tg">&gt;</span></div>
<div class="ar" style="left:160.5px;top:136.32px;border-top:7.500px solid #c4c4c4;border-left:5.500px solid transparent;border-right:5.500px solid transparent"></div>
<div class="ln mono" style="left:191px;top:150.50px"><span class="tg">&lt;div</span> <span class="an">class</span><span class="tg">=</span><span class="av">"df_tag"</span> <span class="an">style</span><span class="tg">=</span><span class="av">"display: none;"</span><span class="tg">&gt;</span><span class="el"></span><span class="tg">&lt;/div&gt;</span></div>
<div class="ar" style="left:177.5px;top:154.20px;border-left:7.500px solid #c4c4c4;border-top:5px solid transparent;border-bottom:5px solid transparent"></div>
<div class="ln mono" style="left:191px;top:170.89px"><span class="tg">&lt;div</span> <span class="an">class</span><span class="tg">=</span><span class="av">"df_tag"</span> <span class="an">style</span><span class="tg">=</span><span class="av">"display: none;"</span><span class="tg">&gt;</span><span class="el"></span><span class="tg">&lt;/div&gt;</span></div>
<div class="ar" style="left:177.5px;top:174.59px;border-left:7.500px solid #c4c4c4;border-top:5px solid transparent;border-bottom:5px solid transparent"></div>
<div class="ln mono" style="left:191px;top:191.27px"><span class="tg">&lt;div</span> <span class="an">class</span><span class="tg">=</span><span class="av">"df_tag"</span> <span class="an">style</span><span class="tg">=</span><span class="av">"display: none;"</span><span class="tg">&gt;</span><span class="el"></span><span class="tg">&lt;/div&gt;</span></div>
<div class="ar" style="left:177.5px;top:194.97px;border-left:7.500px solid #c4c4c4;border-top:5px solid transparent;border-bottom:5px solid transparent"></div>
<div class="ln mono" style="left:191px;top:211.66px"><span class="tg">&lt;div</span> <span class="an">class</span><span class="tg">=</span><span class="av">"df_tag"</span><span class="tg">&gt;</span><span class="el"></span><span class="tg">&lt;/div&gt;</span></div>
<div class="ar" style="left:177.5px;top:215.36px;border-left:7.500px solid #c4c4c4;border-top:5px solid transparent;border-bottom:5px solid transparent"></div>
<div class="ln mono" style="left:191px;top:232.05px"><span class="tg">&lt;div</span> <span class="an">class</span><span class="tg">=</span><span class="av">"df_tag"</span> <span class="an">style</span><span class="tg">=</span><span class="av">"display: none;"</span><span class="tg">&gt;</span><span class="el"></span><span class="tg">&lt;/div&gt;</span></div>
<div class="ar" style="left:177.5px;top:235.75px;border-left:7.500px solid #c4c4c4;border-top:5px solid transparent;border-bottom:5px solid transparent"></div>
<div class="ln mono" style="left:191px;top:252.43px"><span class="tg">&lt;div</span> <span class="an">class</span><span class="tg">=</span><span class="av">"df_tag"</span> <span class="an">style</span><span class="tg">=</span><span class="av">"display: none;"</span><span class="tg">&gt;</span><span class="el"></span><span class="tg">&lt;/div&gt;</span></div>
<div class="ar" style="left:177.5px;top:256.13px;border-left:7.500px solid #c4c4c4;border-top:5px solid transparent;border-bottom:5px solid transparent"></div>
<div class="ln mono" style="left:191px;top:272.82px"><span class="tg">&lt;div</span> <span class="an">class</span><span class="tg">=</span><span class="av">"df_tag"</span> <span class="an">style</span><span class="tg">=</span><span class="av">"display: none;"</span><span class="tg">&gt;</span><span class="el"></span><span class="tg">&lt;/div&gt;</span></div>
<div class="ar" style="left:177.5px;top:276.52px;border-left:7.500px solid #c4c4c4;border-top:5px solid transparent;border-bottom:5px solid transparent"></div>
<div class="ln mono" style="left:191px;top:293.20px"><span class="tg">&lt;div</span> <span class="an">class</span><span class="tg">=</span><span class="av">"df_tag"</span> <span class="an">style</span><span class="tg">=</span><span class="av">"display: none;"</span><span class="tg">&gt;</span><span class="el"></span><span class="tg">&lt;/div&gt;</span></div>
<div class="ar" style="left:177.5px;top:296.90px;border-left:7.500px solid #c4c4c4;border-top:5px solid transparent;border-bottom:5px solid transparent"></div>
<div class="ln mono" style="left:191px;top:313.59px"><span class="tg">&lt;div</span> <span class="an">class</span><span class="tg">=</span><span class="av">"df_tag"</span> <span class="an">style</span><span class="tg">=</span><span class="av">"display: block;"</span><span class="tg">&gt;</span><span class="el"></span><span class="tg">&lt;/div&gt;</span></div>
<div class="ar" style="left:177.5px;top:317.29px;border-left:7.500px solid #c4c4c4;border-top:5px solid transparent;border-bottom:5px solid transparent"></div>
<div class="ln mono" style="left:191px;top:333.98px"><span class="tg">&lt;div</span> <span class="an">class</span><span class="tg">=</span><span class="av">"df_tag"</span> <span class="an">style</span><span class="tg">=</span><span class="av">"display: none;"</span><span class="tg">&gt;</span><span class="el"></span><span class="tg">&lt;/div&gt;</span></div>
<div class="ar" style="left:177.5px;top:337.68px;border-left:7.500px solid #c4c4c4;border-top:5px solid transparent;border-bottom:5px solid transparent"></div>
<div class="ln mono" style="left:191px;top:354.36px"><span class="tg">&lt;div</span> <span class="an">class</span><span class="tg">=</span><span class="av">"df_tag"</span><span class="tg">&gt;</span><span class="el"></span><span class="tg">&lt;/div&gt;</span></div>
<div class="ar" style="left:177.5px;top:358.06px;border-left:7.500px solid #c4c4c4;border-top:5px solid transparent;border-bottom:5px solid transparent"></div>
<div class="ln mono" style="left:191px;top:374.75px"><span class="tg">&lt;div</span> <span class="an">class</span><span class="tg">=</span><span class="av">"df_tag"</span> <span class="an">style</span><span class="tg">=</span><span class="av">"display: block;"</span><span class="tg">&gt;</span><span class="el"></span><span class="tg">&lt;/div&gt;</span></div>
<div class="ar" style="left:177.5px;top:378.45px;border-left:7.500px solid #c4c4c4;border-top:5px solid transparent;border-bottom:5px solid transparent"></div>
<div class="ln mono" style="left:191px;top:395.13px"><span class="tg">&lt;div</span> <span class="an">class</span><span class="tg">=</span><span class="av">"df_tag"</span> <span class="an">style</span><span class="tg">=</span><span class="av">"display: block;"</span><span class="tg">&gt;</span><span class="el"></span><span class="tg">&lt;/div&gt;</span></div>
<div class="ar" style="left:177.5px;top:398.83px;border-left:7.500px solid #c4c4c4;border-top:5px solid transparent;border-bottom:5px solid transparent"></div>
<div class="ln mono" style="left:191px;top:415.52px"><span class="tg">&lt;div</span> <span class="an">class</span><span class="tg">=</span><span class="av">"df_tag"</span> <span class="an">style</span><span class="tg">=</span><span class="av">"display: block;"</span><span class="tg">&gt;</span><span class="el"></span><span class="tg">&lt;/div&gt;</span></div>
<div class="ar" style="left:177.5px;top:419.22px;border-left:7.500px solid #c4c4c4;border-top:5px solid transparent;border-bottom:5px solid transparent"></div>
<div class="ln mono" style="left:191px;top:435.91px"><span class="tg">&lt;div</span> <span class="an">class</span><span class="tg">=</span><span class="av">"df_tag"</span> <span class="an">style</span><span class="tg">=</span><span class="av">"display: block;"</span><span class="tg">&gt;</span><span class="el"></span><span class="tg">&lt;/div&gt;</span></div>
<div class="ar" style="left:177.5px;top:439.61px;border-left:7.500px solid #c4c4c4;border-top:5px solid transparent;border-bottom:5px solid transparent"></div>
<div class="ln mono" style="left:191px;top:456.29px"><span class="tg">&lt;div</span> <span class="an">class</span><span class="tg">=</span><span class="av">"df_tag"</span><span class="tg">&gt;</span><span class="el"></span><span class="tg">&lt;/div&gt;</span></div>
<div class="ar" style="left:177.5px;top:459.99px;border-left:7.500px solid #c4c4c4;border-top:5px solid transparent;border-bottom:5px solid transparent"></div>
<div class="ln mono" style="left:191px;top:476.68px"><span class="tg">&lt;div</span> <span class="an">class</span><span class="tg">=</span><span class="av">"df_tag"</span><span class="tg">&gt;</span><span class="el"></span><span class="tg">&lt;/div&gt;</span></div>
<div class="ar" style="left:177.5px;top:480.38px;border-left:7.500px solid #c4c4c4;border-top:5px solid transparent;border-bottom:5px solid transparent"></div>
<div class="ln mono" style="left:191px;top:497.06px"><span class="tg">&lt;div</span> <span class="an">class</span><span class="tg">=</span><span class="av">"df_tag"</span><span class="tg">&gt;</span><span class="el"></span><span class="tg">&lt;/div&gt;</span></div>
<div class="ar" style="left:177.5px;top:500.76px;border-left:7.500px solid #c4c4c4;border-top:5px solid transparent;border-bottom:5px solid transparent"></div>
<div class="ln mono" style="left:191px;top:517.45px"><span class="tg">&lt;div</span> <span class="an">class</span><span class="tg">=</span><span class="av">"df_tag"</span><span class="tg">&gt;</span><span class="el"></span><span class="tg">&lt;/div&gt;</span></div>
<div class="ar" style="left:177.5px;top:521.15px;border-left:7.500px solid #c4c4c4;border-top:5px solid transparent;border-bottom:5px solid transparent"></div>
<div class="ln mono" style="left:191px;top:537.84px"><span class="tg">&lt;div</span> <span class="an">class</span><span class="tg">=</span><span class="av">"df_tag"</span> <span class="an">style</span><span class="tg">=</span><span class="av">"display: block;"</span><span class="tg">&gt;</span><span class="el"></span><span class="tg">&lt;/div&gt;</span></div>
<div class="ar" style="left:177.5px;top:541.54px;border-left:7.500px solid #c4c4c4;border-top:5px solid transparent;border-bottom:5px solid transparent"></div>
<div class="ln mono" style="left:191px;top:558.22px"><span class="tg">&lt;div</span> <span class="an">class</span><span class="tg">=</span><span class="av">"df_tag"</span> <span class="an">style</span><span class="tg">=</span><span class="av">"display: block;"</span><span class="tg">&gt;</span><span class="el"></span><span class="tg">&lt;/div&gt;</span></div>
<div class="ar" style="left:177.5px;top:561.92px;border-left:7.500px solid #c4c4c4;border-top:5px solid transparent;border-bottom:5px solid transparent"></div>
<div class="ln mono" style="left:191px;top:578.61px"><span class="tg">&lt;div</span> <span class="an">class</span><span class="tg">=</span><span class="av">"df_tag"</span><span class="tg">&gt;</span><span class="el"></span><span class="tg">&lt;/div&gt;</span></div>
<div class="ar" style="left:177.5px;top:582.31px;border-left:7.500px solid #c4c4c4;border-top:5px solid transparent;border-bottom:5px solid transparent"></div>
<div class="ln mono" style="left:191px;top:598.99px"><span class="tg">&lt;div</span> <span class="an">class</span><span class="tg">=</span><span class="av">"df_tag"</span><span class="tg">&gt;</span><span class="el"></span><span class="tg">&lt;/div&gt;</span></div>
<div class="ar" style="left:177.5px;top:602.69px;border-left:7.500px solid #c4c4c4;border-top:5px solid transparent;border-bottom:5px solid transparent"></div>
<div class="ln mono" style="left:191px;top:619.38px"><span class="tg">&lt;div</span> <span class="an">class</span><span class="tg">=</span><span class="av">"df_tag"</span> <span class="an">style</span><span class="tg">=</span><span class="av">"display: block;"</span><span class="tg">&gt;</span><span class="el"></span><span class="tg">&lt;/div&gt;</span></div>
<div class="ar" style="left:177.5px;top:623.08px;border-left:7.500px solid #c4c4c4;border-top:5px solid transparent;border-bottom:5px solid transparent"></div>
<div class="ln mono" style="left:191px;top:639.77px"><span class="tg">&lt;div</span> <span class="an">class</span><span class="tg">=</span><span class="av">"df_tag"</span> <span class="an">style</span><span class="tg">=</span><span class="av">"display: block;"</span><span class="tg">&gt;</span><span class="el"></span><span class="tg">&lt;/div&gt;</span></div>
<div class="ar" style="left:177.5px;top:643.47px;border-left:7.500px solid #c4c4c4;border-top:5px solid transparent;border-bottom:5px solid transparent"></div>
<div class="ln mono" style="left:191px;top:660.15px"><span class="tg">&lt;div</span> <span class="an">class</span><span class="tg">=</span><span class="av">"df_tag"</span> <span class="an">style</span><span class="tg">=</span><span class="av">"display: block;"</span><span class="tg">&gt;</span></div>
<div class="ar" style="left:175.5px;top:666.35px;border-top:7.500px solid #c4c4c4;border-left:5.500px solid transparent;border-right:5.500px solid transparent"></div>
<div class="ln mono" style="left:203.70000000000005px;top:680.54px"><span class="tg">&lt;label</span> <span class="an">class</span><span class="tg">=</span><span class="av">"df_labelc"</span><span class="tg">&gt;</span><span class="tx"><span style="font-size:15px">密码</span> : </span><span class="tg">&lt;/label&gt;</span></div>
<div class="ln mono" style="left:203.70000000000005px;top:700.92px"><span class="tg">&lt;</span><span class="tg" style="text-decoration:underline wavy #e8623a;text-decoration-thickness:1px;text-underline-offset:3px">input</span> <span class="an">type</span><span class="tg">=</span><span class="av">"passlword"</span> <span class="an">class</span><span class="tg">=</span><span class="av">"df_text"</span> <span class="an">maxlength</span><span class="tg">=</span></div>
<div class="ln mono" style="left:203.70000000000005px;top:721.31px"><span class="av">"32"</span> <span class="an">name</span><span class="tg">=</span><span class="av">"text_string"</span> <span class="an">id</span><span class="tg">=</span><span class="av">"WanPassword_text"</span></div>
<div class="ln mono" style="left:203.70000000000005px;top:741.70px"><span class="an">style</span><span class="tg">=</span><span class="av">"border: 1px solid rgb(210, 210, 210);</span></div>
<div class="ln mono" style="left:203.70000000000005px;top:762.08px"><span class="av">"</span><span class="tg">&gt;</span><span style="color:#7a7a7a;font-style:italic"> == $0</span></div>
<div class="ln mono" style="left:207px;top:782.47px"><span class="tg">&lt;div</span> <span class="an">class</span><span class="tg">=</span><span class="av">"df_check_panel"</span><span class="tg">&gt;</span><span class="el"></span><span class="tg">&lt;/div&gt;</span></div>
<div class="ar" style="left:193.5px;top:786.17px;border-left:7.500px solid #c4c4c4;border-top:5px solid transparent;border-bottom:5px solid transparent"></div>
<div class="ln mono" style="left:203.70000000000005px;top:802.85px"><span class="tg">&lt;span</span> <span class="an">class</span><span class="tg">=</span><span class="av">"df_after"</span><span class="tg">&gt;&lt;/span&gt;</span></div>
<div class="ln mono" style="left:189.20000000000005px;top:823.24px"><span class="tg">&lt;/div&gt;</span></div>
<div class="ln mono" style="left:191px;top:843.63px"><span class="tg">&lt;div</span> <span class="an">class</span><span class="tg">=</span><span class="av">"df_tag"</span> <span class="an">style</span><span class="tg">=</span><span class="av">"display: none;"</span><span class="tg">&gt;</span><span class="el"></span><span class="tg">&lt;/div&gt;</span></div>
<div class="ar" style="left:177.5px;top:847.33px;border-left:7.500px solid #c4c4c4;border-top:5px solid transparent;border-bottom:5px solid transparent"></div>
<div class="ln mono" style="left:191px;top:864.01px"><span class="tg">&lt;div</span> <span class="an">class</span><span class="tg">=</span><span class="av">"df_tag"</span> <span class="an">style</span><span class="tg">=</span><span class="av">"display: none;"</span><span class="tg">&gt;</span><span class="el"></span><span class="tg">&lt;/div&gt;</span></div>
<div class="ar" style="left:177.5px;top:867.71px;border-left:7.500px solid #c4c4c4;border-top:5px solid transparent;border-bottom:5px solid transparent"></div>
<div class="ln mono" style="left:191px;top:884.40px"><span class="tg">&lt;div</span> <span class="an">class</span><span class="tg">=</span><span class="av">"df_tag"</span> <span class="an">style</span><span class="tg">=</span><span class="av">"display: block;"</span><span class="tg">&gt;</span><span class="el"></span><span class="tg">&lt;/div&gt;</span></div>
<div class="ar" style="left:177.5px;top:888.10px;border-left:7.500px solid #c4c4c4;border-top:5px solid transparent;border-bottom:5px solid transparent"></div>
<div class="ln mono" style="left:191px;top:904.78px"><span class="tg">&lt;div</span> <span class="an">class</span><span class="tg">=</span><span class="av">"df_tag"</span> <span class="an">style</span><span class="tg">=</span><span class="av">"display: block;"</span><span class="tg">&gt;</span><span class="el"></span><span class="tg">&lt;/div&gt;</span></div>
<div class="ar" style="left:177.5px;top:908.48px;border-left:7.500px solid #c4c4c4;border-top:5px solid transparent;border-bottom:5px solid transparent"></div>
<div class="ln mono" style="left:191px;top:925.17px"><span class="tg">&lt;div</span> <span class="an">class</span><span class="tg">=</span><span class="av">"df_tag"</span> <span class="an">style</span><span class="tg">=</span><span class="av">"display: block;"</span><span class="tg">&gt;</span><span class="el"></span><span class="tg">&lt;/div&gt;</span></div>
<div class="ar" style="left:177.5px;top:928.87px;border-left:7.500px solid #c4c4c4;border-top:5px solid transparent;border-bottom:5px solid transparent"></div>
<div class="ln mono" style="left:191px;top:945.56px"><span class="tg">&lt;div</span> <span class="an">class</span><span class="tg">=</span><span class="av">"df_tag"</span> <span class="an">style</span><span class="tg">=</span><span class="av">"display: block;"</span><span class="tg">&gt;</span><span class="el"></span><span class="tg">&lt;/div&gt;</span></div>
<div class="ar" style="left:177.5px;top:949.26px;border-left:7.500px solid #c4c4c4;border-top:5px solid transparent;border-bottom:5px solid transparent"></div>
<div class="ln mono" style="left:191px;top:965.94px"><span class="tg">&lt;div</span> <span class="an">class</span><span class="tg">=</span><span class="av">"df_tag"</span> <span class="an">style</span><span class="tg">=</span><span class="av">"display: none;"</span><span class="tg">&gt;</span><span class="el"></span><span class="tg">&lt;/div&gt;</span></div>
<div class="ar" style="left:177.5px;top:969.64px;border-left:7.500px solid #c4c4c4;border-top:5px solid transparent;border-bottom:5px solid transparent"></div>
<div class="ln mono" style="left:191px;top:986.33px"><span class="tg">&lt;div</span> <span class="an">class</span><span class="tg">=</span><span class="av">"df_tag"</span> <span class="an">style</span><span class="tg">=</span><span class="av">"display: none;"</span><span class="tg">&gt;</span><span class="el"></span><span class="tg">&lt;/div&gt;</span></div>
<div class="ar" style="left:177.5px;top:990.03px;border-left:7.500px solid #c4c4c4;border-top:5px solid transparent;border-bottom:5px solid transparent"></div>
<div class="ln mono" style="left:191px;top:1006.71px"><span class="tg">&lt;div</span> <span class="an">class</span><span class="tg">=</span><span class="av">"df_tag"</span> <span class="an">style</span><span class="tg">=</span><span class="av">"display: none;"</span><span class="tg">&gt;</span><span class="el"></span><span class="tg">&lt;/div&gt;</span></div>
<div class="ar" style="left:177.5px;top:1010.41px;border-left:7.500px solid #c4c4c4;border-top:5px solid transparent;border-bottom:5px solid transparent"></div>
<div class="ln mono" style="left:191px;top:1027.10px"><span class="tg">&lt;div</span> <span class="an">class</span><span class="tg">=</span><span class="av">"df_tag"</span> <span class="an">style</span><span class="tg">=</span><span class="av">"display: none;"</span><span class="tg">&gt;</span><span class="el"></span><span class="tg">&lt;/div&gt;</span></div>
<div class="ar" style="left:177.5px;top:1030.80px;border-left:7.500px solid #c4c4c4;border-top:5px solid transparent;border-bottom:5px solid transparent"></div>
<div class="ln mono" style="left:191px;top:1047.49px"><span class="tg">&lt;div</span> <span class="an">class</span><span class="tg">=</span><span class="av">"df_tag"</span> <span class="an">style</span><span class="tg">=</span><span class="av">"display: block;"</span><span class="tg">&gt;</span><span class="el"></span><span class="tg">&lt;/div&gt;</span></div>
<div class="ar" style="left:177.5px;top:1051.19px;border-left:7.500px solid #c4c4c4;border-top:5px solid transparent;border-bottom:5px solid transparent"></div>
<div class="ln mono" style="left:191px;top:1067.87px"><span class="tg">&lt;div</span> <span class="an">class</span><span class="tg">=</span><span class="av">"df_tag"</span> <span class="an">style</span><span class="tg">=</span><span class="av">"display: none;"</span><span class="tg">&gt;</span><span class="el"></span><span class="tg">&lt;/div&gt;</span></div>
<div class="ar" style="left:177.5px;top:1071.57px;border-left:7.500px solid #c4c4c4;border-top:5px solid transparent;border-bottom:5px solid transparent"></div>
<div class="ln mono" style="left:191px;top:1088.26px"><span class="tg">&lt;div</span> <span class="an">class</span><span class="tg">=</span><span class="av">"df_tag"</span> <span class="an">style</span><span class="tg">=</span><span class="av">"display: block;"</span><span class="tg">&gt;</span><span class="el"></span><span class="tg">&lt;/div&gt;</span></div>
<div class="ar" style="left:177.5px;top:1091.96px;border-left:7.500px solid #c4c4c4;border-top:5px solid transparent;border-bottom:5px solid transparent"></div>
<div class="ln mono" style="left:191px;top:1108.64px"><span class="tg">&lt;div</span> <span class="an">class</span><span class="tg">=</span><span class="av">"df_tag"</span> <span class="an">style</span><span class="tg">=</span><span class="av">"display: none;"</span><span class="tg">&gt;</span><span class="el"></span><span class="tg">&lt;/div&gt;</span></div>
<div class="ar" style="left:177.5px;top:1112.34px;border-left:7.500px solid #c4c4c4;border-top:5px solid transparent;border-bottom:5px solid transparent"></div>
<div class="ln mono" style="left:191px;top:1129.03px"><span class="tg">&lt;div</span> <span class="an">class</span><span class="tg">=</span><span class="av">"df_tag"</span> <span class="an">style</span><span class="tg">=</span><span class="av">"display: block;"</span><span class="tg">&gt;</span><span class="el"></span><span class="tg">&lt;/div&gt;</span></div>
<div class="ar" style="left:177.5px;top:1132.73px;border-left:7.500px solid #c4c4c4;border-top:5px solid transparent;border-bottom:5px solid transparent"></div>
<div class="ln mono" style="left:191px;top:1149.42px"><span class="tg">&lt;div</span> <span class="an">class</span><span class="tg">=</span><span class="av">"df_tag"</span> <span class="an">style</span><span class="tg">=</span><span class="av">"display: none;"</span><span class="tg">&gt;</span><span class="el"></span><span class="tg">&lt;/div&gt;</span></div>
<div class="ar" style="left:177.5px;top:1153.12px;border-left:7.500px solid #c4c4c4;border-top:5px solid transparent;border-bottom:5px solid transparent"></div>
<div class="ln mono" style="left:191px;top:1169.80px"><span class="tg">&lt;div</span> <span class="an">class</span><span class="tg">=</span><span class="av">"df_tag"</span> <span class="an">style</span><span class="tg">=</span><span class="av">"display: none;"</span><span class="tg">&gt;</span><span class="el"></span><span class="tg">&lt;/div&gt;</span></div>
<div class="ar" style="left:177.5px;top:1173.50px;border-left:7.500px solid #c4c4c4;border-top:5px solid transparent;border-bottom:5px solid transparent"></div>
</div>
<div class="abs" style="left:632px;top:39px;width:15px;height:1189.500px;background:#2c2c2c"></div>
<div class="ar" style="left:633px;top:51px;border-bottom:8px solid #9d9d9d;border-left:6.500px solid transparent;border-right:6.500px solid transparent"></div>
<div class="ar" style="left:633px;top:1207px;border-top:8px solid #9d9d9d;border-left:6.500px solid transparent;border-right:6.500px solid transparent"></div>
<div class="abs" style="left:635px;top:243px;width:11px;height:318px;background:#9e9e9e;border-radius:6px"></div>
<div class="abs" style="left:647px;top:39px;width:3px;height:1221px;background:#222"></div>
<div class="abs" style="left:649.500px;top:39px;width:1px;height:1221px;background:#4a4a4a"></div>
<div class="abs" style="left:0;top:1227.500px;width:647px;height:30px;background:#242424;border-top:1px solid #555;border-bottom:1px solid #555"></div>
<div class="abs" style="left:0;top:1228px;width:28px;height:29px;border:1.300px solid #6a6a6a;background:#282828"></div>
<div class="ar" style="left:10px;top:1238.500px;border-right:5px solid #d0d0d0;border-top:4px solid transparent;border-bottom:4px solid transparent"></div>
<div class="ar" style="left:633px;top:1238.500px;border-left:5px solid #9a9a9a;border-top:4px solid transparent;border-bottom:4px solid transparent"></div>
<div class="abs" style="left:389px;top:1228.500px;width:232px;height:28px;background:#014a7a"></div>
<div class="abs" style="left:28.500px;width:19.500px;overflow:hidden;direction:rtl;font-size:14.700px;line-height:26px;top:1230px;white-space:nowrap;color:#6cb2ee">layer</div>
<div class="abs" style="left:65px;font-size:14.700px;line-height:26px;top:1230px;white-space:nowrap;color:#6cb2ee">div.df_panel</div>
<div class="abs" style="left:161px;font-size:14.700px;line-height:26px;top:1230px;white-space:nowrap;color:#6cb2ee">div.df_panel_content</div>
<div class="abs" style="left:315px;font-size:14.700px;line-height:26px;top:1230px;white-space:nowrap;color:#6cb2ee">div.df_tag</div>
<div class="abs" style="left:397px;font-size:14.700px;line-height:26px;top:1230px;white-space:nowrap;color:#6cb2ee"><span style="color:#6cb2ee">input</span><span style="color:#fff">#WanPassword_text</span><span style="color:#f5d53a">.df_text</span></div>
<div class="abs" style="left:0;top:1257.500px;width:1055px;height:41px;background:#333"></div>
<div class="abs" style="left:7px;top:1260px;width:70px;height:35px;background:#262626;border-radius:4px"></div>
<div class="abs" style="left:19px;top:1268px;font-size:15px;line-height:22px;color:#8ab4f8;white-space:nowrap">控制台</div>
<div class="abs" style="left:89px;top:1268px;font-size:15px;line-height:22px;color:#c8c8c8;white-space:nowrap">问题</div>
<svg style="left:144px;top:1269px" width="17" height="17" viewBox="0 0 17 17" stroke="#fff" stroke-width="1.400"><path d="M8.500 0 V17 M0 8.500 H17"/></svg>
<svg style="left:978px;top:1269px" width="21" height="17" viewBox="0 0 21 17" fill="none" stroke="#fff" stroke-width="1.400"><rect x="8" y="6" width="12" height="10" rx="2"/><path d="M8 10.500 H20"/><path d="M9 1.500 H18" stroke-dasharray="3 2"/><path d="M19.500 1.500 V5" stroke-dasharray="2 2"/><path d="M5 3 L1.500 6.500 L5 10 M1.500 6.500 Q1.500 12 6 12.500"/></svg>
<svg style="left:1020px;top:1270px" width="21" height="16" viewBox="0 0 21 16" fill="none" stroke="#fff" stroke-width="1.400"><rect x="0.800" y="0.800" width="19.400" height="14.400" rx="2.500"/><path d="M0.800 11 H20.200 M10.500 10.500 V4.500 M8 6.500 L10.500 4 L13 6.500"/></svg>
<div class="abs" style="left:650px;top:39px;width:405px;height:1218.500px;background:#282828;overflow:hidden">
<div class="abs" style="left:0;top:0;width:405px;height:40px;background:#333"></div>
<div class="abs" style="left:4px;top:2px;width:55px;height:35px;background:#242424;border-radius:4px"></div>
<div class="abs" style="left:15px;font-size:15.500px;line-height:22px;top:9.500px;white-space:nowrap;color:#8ab4f8">样式</div>
<div class="abs" style="left:71px;font-size:15.500px;line-height:22px;top:9.500px;white-space:nowrap;color:#c4c4c4">已计算</div>
<div class="abs" style="left:140px;font-size:15.500px;line-height:22px;top:9.500px;white-space:nowrap;color:#c4c4c4">布局</div>
<div class="abs" style="left:196px;font-size:15.500px;line-height:22px;top:9.500px;white-space:nowrap;color:#c4c4c4">事件侦听器</div>
<svg style="left:373px;top:17px" width="13" height="8" viewBox="0 0 13 8" fill="none" stroke="#fff" stroke-width="1.500"><path d="M1 1 L6.500 6.500 L12 1"/></svg>
<div class="abs" style="left:0;top:40px;width:386px;height:41px;background:#282828;border-bottom:1px solid #4a4a4a"></div>
<div class="abs" style="left:6px;top:45.500px;width:150px;height:29.500px;border-radius:15px;background:#3a3a3a"></div>
<svg style="left:19px;top:54px" width="15" height="12" viewBox="0 0 15 12" stroke="#c8c8c8" stroke-width="1.500" stroke-linecap="round"><path d="M1 1.500 H14 M3.500 6 H11.500 M6 10.500 H9"/></svg>
<div class="abs" style="left:41px;top:49.500px;font-size:16px;line-height:22px;color:#a8a8a8">Filter</div>
<div class="abs mono" style="left:168px;top:49.500px;line-height:22px;color:#fff;font-weight:bold">:hov</div>
<div class="abs mono" style="left:219px;top:49.500px;line-height:22px;color:#fff;font-weight:bold">.cls</div>
<svg style="left:271px;top:50px" width="22" height="22" viewBox="0 0 22 22" stroke="#fff" stroke-width="1.400"><path d="M9 1 V17 M1 9 H17"/><path d="M20 15 V20 H15Z" fill="#fff" stroke="none"/></svg>
<svg style="left:313px;top:48px" width="14" height="22" viewBox="0 0 14 22" fill="none" stroke="#fff" stroke-width="1.400" stroke-linejoin="round"><path d="M1.500 1 H12.500 V9 Q12.500 11 10.500 11 H8.500 V17 Q8.500 19.500 7 19.500 Q5.500 19.500 5.500 17 V11 H3.500 Q1.500 11 1.500 9Z M1.500 7 H12.500 M6 1 V4 M9 1 V5"/></svg>
<svg style="left:349px;top:51px" width="21" height="16" viewBox="0 0 21 16"><rect x="0.800" y="0.800" width="19.400" height="14.400" rx="3" fill="none" stroke="#fff" stroke-width="1.500"/><path d="M11 1 H18 Q20 1 20 3 V13 Q20 15 18 15 H11Z" fill="#fff"/><path d="M9 8 H4 M6 5.500 L3.500 8 L6 10.500" stroke="#fff" stroke-width="1.300" fill="none"/></svg>
<div class="abs" style="left:0;top:508.5px;width:386px;height:708.5px;background:#333"></div>
<div class="abs" style="left:0;top:151px;width:386px;height:1px;background:#4f4f4f"></div>
<div class="abs" style="left:0;top:329px;width:386px;height:1px;background:#4f4f4f"></div>
<div class="abs" style="left:0;top:508px;width:386px;height:1px;background:#4f4f4f"></div>
<div class="abs" style="left:0;top:591px;width:386px;height:1px;background:#4f4f4f"></div>
<div class="sl mono " style="left:5px;top:84.8px"><span class="sc">element.style {</span></div>
<div class="sl mono " style="left:27px;top:111.8px"><span class="pn">border</span><span class="pv">:<span style="display:inline-block;width:0;height:0;border-left:6.500px solid #bdbdbd;border-top:4.500px solid transparent;border-bottom:4.500px solid transparent;margin:0 7px 0 9px;vertical-align:0px"></span>1px solid <span style="display:inline-block;width:11.500px;height:11.500px;background:#d2d2d2;border:1px solid #8a8a8a;margin:0 5px 0 2.500px;vertical-align:-1px"></span>rgb(210, 210, 210);</span></div>
<div class="sl mono " style="left:5px;top:129.8px"><span class="sc">}</span></div>
<div class="sl mono " style="left:5px;top:156.8px"><span class="sc">.df_text {</span></div>
<div class="sl mono" style="right:21px;top:157.8px;color:#6cb5f5;text-decoration:underline">index_conte…2848926:612</div>
<div class="sl mono " style="left:27px;top:181.8px"><span class="st"><span class="pn">border</span><span class="pv">:<span style="display:inline-block;width:0;height:0;border-left:6.500px solid #bdbdbd;border-top:4.500px solid transparent;border-bottom:4.500px solid transparent;margin:0 7px 0 9px;vertical-align:0px"></span>1px solid <span style="display:inline-block;width:11.500px;height:11.500px;background:#d2d2d2;border:1px solid #8a8a8a;margin:0 5px 0 2.500px;vertical-align:-1px"></span>#D2D2D2;</span></span></div>
<div class="sl mono " style="left:27px;top:199.8px"><span class="pn">margin</span><span class="pv">:<span style="display:inline-block;width:0;height:0;border-left:6.500px solid #bdbdbd;border-top:4.500px solid transparent;border-bottom:4.500px solid transparent;margin:0 7px 0 9px;vertical-align:0px"></span>1px 1px 1px 2px;</span></div>
<div class="sl mono " style="left:27px;top:217.8px"><span class="pn"><span style="text-decoration:underline wavy #d9b400;text-decoration-thickness:1px;text-underline-offset:3px">height</span></span><span class="pv">: 18px;</span></div>
<div class="sl mono " style="left:27px;top:235.8px"><span class="pn"><span style="text-decoration:underline wavy #d9b400;text-decoration-thickness:1px;text-underline-offset:3px">width</span></span><span class="pv">: 160px;</span></div>
<div class="sl mono " style="left:27px;top:253.8px"><span class="pn">float</span><span class="pv">: left;</span></div>
<div class="sl mono " style="left:27px;top:271.8px"><span class="pn">font-family</span><span class="pv">: "Microsoft Yahei", sans-</span></div>
<div class="sl mono " style="left:51px;top:289.8px"><span class="pv">serif;</span></div>
<div class="sl mono " style="left:5px;top:307.8px"><span class="sc">}</span></div>
<div class="sl mono " style="left:5px;top:335.8px"><span class="sc">.df_text {</span></div>
<div class="sl mono" style="right:21px;top:336.8px;color:#6cb5f5;text-decoration:underline">nc.css?v=time:347</div>
<div class="sl mono " style="left:27px;top:360.8px"><span class="st"><span class="pn">border</span><span class="pv">:<span style="display:inline-block;width:0;height:0;border-left:6.500px solid #bdbdbd;border-top:4.500px solid transparent;border-bottom:4.500px solid transparent;margin:0 7px 0 9px;vertical-align:0px"></span>1px solid <span style="display:inline-block;width:11.500px;height:11.500px;background:#d2d2d2;border:1px solid #8a8a8a;margin:0 5px 0 2.500px;vertical-align:-1px"></span>#D2D2D2;</span></span></div>
<div class="sl mono " style="left:27px;top:378.8px"><span class="st"><span class="pn">margin</span><span class="pv">:<span style="display:inline-block;width:0;height:0;border-left:6.500px solid #bdbdbd;border-top:4.500px solid transparent;border-bottom:4.500px solid transparent;margin:0 7px 0 9px;vertical-align:0px"></span>1px 1px 1px 2px;</span></span></div>
<div class="sl mono " style="left:27px;top:396.8px"><span class="st"><span class="pn"><span style="text-decoration:underline wavy #d9b400;text-decoration-thickness:1px;text-underline-offset:3px">height</span></span><span class="pv">: 18px;</span></span></div>
<div class="sl mono " style="left:27px;top:414.8px"><span class="st"><span class="pn"><span style="text-decoration:underline wavy #d9b400;text-decoration-thickness:1px;text-underline-offset:3px">width</span></span><span class="pv">: 160px;</span></span></div>
<div class="sl mono " style="left:27px;top:432.8px"><span class="st"><span class="pn">float</span><span class="pv">: left;</span></span></div>
<div class="sl mono " style="left:27px;top:450.8px"><span class="st"><span class="pn">font-family</span><span class="pv">: "Microsoft Yahei", sans-</span></span></div>
<div class="sl mono " style="left:51px;top:468.8px"><span class="st"><span class="pv">serif;</span></span></div>
<div class="sl mono " style="left:5px;top:486.8px"><span class="sc">}</span></div>
<div class="sl mono " style="left:5px;top:513.8px"><span style="color:#c8c8c8;font-style:italic">input:not([type="file" i],</span></div>
<div class="sl mono " style="left:5px;top:531.8px"><span style="color:#c8c8c8;font-style:italic">[type="image" i],</span></div>
<div class="sl mono " style="left:5px;top:549.8px"><span style="color:#c8c8c8;font-style:italic">[type="checkbox" i], [type="radio" i]) {</span></div>
<div class="sl mono " style="left:5px;top:567.8px"><span style="color:#c8c8c8;font-style:italic">}</span></div>
<div class="sl mono " style="left:5px;top:596.8px"><span style="color:#c8c8c8;font-style:italic">input {</span></div>
<div class="sl" style="right:21px;top:513px;color:#bdbdbd;font-style:italic;font-size:15px;white-space:nowrap;letter-spacing:1px">用户代理样式表</div>
<div class="sl" style="right:21px;top:596px;color:#bdbdbd;font-style:italic;font-size:15px;white-space:nowrap;letter-spacing:1px">用户代理样式表</div>
<div class="sl mono ua" style="left:27px;top:622.8px"><span class="pn">font-style</span><span class="pv">: ;</span></div>
<div class="sl mono ua" style="left:27px;top:640.8px"><span class="pn">font-variant-ligatures</span><span class="pv">: ;</span></div>
<div class="sl mono ua" style="left:27px;top:658.8px"><span class="pn">font-variant-caps</span><span class="pv">: ;</span></div>
<div class="sl mono ua" style="left:27px;top:676.8px"><span class="pn">font-variant-numeric</span><span class="pv">: ;</span></div>
<div class="sl mono ua" style="left:27px;top:694.8px"><span class="pn">font-variant-east-asian</span><span class="pv">: ;</span></div>
<div class="sl mono ua" style="left:27px;top:712.8px"><span class="pn">font-variant-alternates</span><span class="pv">: ;</span></div>
<div class="sl mono ua" style="left:27px;top:730.8px"><span class="pn">font-variant-position</span><span class="pv">: ;</span></div>
<div class="sl mono ua" style="left:27px;top:748.8px"><span class="pn">font-weight</span><span class="pv">: ;</span></div>
<div class="sl mono ua" style="left:27px;top:766.8px"><span class="pn">font-stretch</span><span class="pv">: ;</span></div>
<div class="sl mono ua" style="left:27px;top:784.8px"><span class="pn">font-size</span><span class="pv">: ;</span></div>
<div class="sl mono ua" style="left:27px;top:802.8px"><span class="st"><span class="pn">font-family</span><span class="pv">: ;</span></span></div>
<div class="sl mono ua" style="left:27px;top:820.8px"><span class="pn">font-optical-sizing</span><span class="pv">: ;</span></div>
<div class="sl mono ua" style="left:27px;top:838.8px"><span class="pn">font-kerning</span><span class="pv">: ;</span></div>
<div class="sl mono ua" style="left:27px;top:856.8px"><span class="pn">font-feature-settings</span><span class="pv">: ;</span></div>
<div class="sl mono ua" style="left:27px;top:874.8px"><span class="pn">font-variation-settings</span><span class="pv">: ;</span></div>
<div class="sl mono ua" style="left:27px;top:892.8px"><span class="pn">text-rendering</span><span class="pv">: auto;</span></div>
<div class="sl mono ua" style="left:27px;top:910.8px"><span class="pn">color</span><span class="pv">: fieldtext;</span></div>
<div class="sl mono ua" style="left:27px;top:928.8px"><span class="pn">letter-spacing</span><span class="pv">: normal;</span></div>
<div class="sl mono ua" style="left:27px;top:946.8px"><span class="pn">word-spacing</span><span class="pv">: normal;</span></div>
<div class="sl mono ua" style="left:27px;top:964.8px"><span class="pn">line-height</span><span class="pv">: normal;</span></div>
<div class="sl mono ua" style="left:27px;top:982.8px"><span class="pn">text-transform</span><span class="pv">: none;</span></div>
<div class="sl mono ua" style="left:27px;top:1000.8px"><span class="pn">text-indent</span><span class="pv">: 0px;</span></div>
<div class="sl mono ua" style="left:27px;top:1018.8px"><span class="pn">text-shadow</span><span class="pv">: none;</span></div>
<div class="sl mono ua" style="left:27px;top:1036.8px"><span class="pn">display</span><span class="pv">: inline-block;</span></div>
<div class="sl mono ua" style="left:27px;top:1054.8px"><span class="pn">text-align</span><span class="pv">: start;</span></div>
<div class="sl mono ua" style="left:27px;top:1072.8px"><span class="pn">appearance</span><span class="pv">: auto;</span></div>
<div class="sl mono ua" style="left:27px;top:1090.8px"><span class="pn">-webkit-rtl-ordering</span><span class="pv">: logical;</span></div>
<div class="sl mono ua" style="left:27px;top:1108.8px"><span class="pn">cursor</span><span class="pv">: text;</span></div>
<div class="sl mono ua" style="left:27px;top:1126.8px"><span class="pn">background-color</span><span class="pv">: field;</span></div>
<div class="sl mono ua" style="left:27px;top:1144.8px"><span class="st" style="color:#a0a0a0"><span class="pn" style="color:#8ab8d0">margin</span><span style="color:#a0a0a0">:<span style="display:inline-block;width:0;height:0;border-left:6.500px solid #a8a8a8;border-top:4.500px solid transparent;border-bottom:4.500px solid transparent;margin:0 7px 0 9px;vertical-align:0px"></span>0em;</span></span></div>
<div class="sl mono ua" style="left:27px;top:1162.8px"><span class="pn">padding</span><span style="color:#a8a8a8">:<span style="display:inline-block;width:0;height:0;border-left:6.500px solid #a8a8a8;border-top:4.500px solid transparent;border-bottom:4.500px solid transparent;margin:0 7px 0 9px;vertical-align:0px"></span>1px 0px;</span></div>
<div class="sl mono ua" style="left:27px;top:1180.8px"><span class="st"><span class="pn" style="color:#8ab8d0">border-width</span><span style="color:#a0a0a0">:<span style="display:inline-block;width:0;height:0;border-left:6.500px solid #a8a8a8;border-top:4.500px solid transparent;border-bottom:4.500px solid transparent;margin:0 7px 0 9px;vertical-align:0px"></span>2px;</span></span></div>
<div class="sl mono ua" style="left:27px;top:1198.8px"><span class="st"><span class="pn" style="color:#8ab8d0">border-style</span><span style="color:#a0a0a0">:<span style="display:inline-block;width:0;height:0;border-left:6.500px solid #a8a8a8;border-top:4.500px solid transparent;border-bottom:4.500px solid transparent;margin:0 7px 0 9px;vertical-align:0px"></span>inset;</span></span></div>
<div class="abs" style="left:386px;top:40px;width:19px;height:1177px;background:#2c2c2c"></div>
<div class="ar" style="left:389px;top:51px;border-bottom:8px solid #9d9d9d;border-left:6.500px solid transparent;border-right:6.500px solid transparent"></div>
<div class="ar" style="left:389px;top:1197px;border-top:8px solid #9d9d9d;border-left:6.500px solid transparent;border-right:6.500px solid transparent"></div>
<div class="abs" style="left:390px;top:69px;width:11px;height:535px;background:#9e9e9e;border-radius:6px"></div>
</div>
</div>
<div class="abs" style="left:2505px;top:88px;width:55px;height:1302px;background:#3b3b3b"></div>
<svg style="left:2519px;top:103px" width="26" height="26" viewBox="0 0 26 26" fill="none"><circle cx="10.500" cy="10.500" r="7.500" stroke="#c8c8c8" stroke-width="3"/><path d="M16.500 16.500 L23 23" stroke="#b07cf0" stroke-width="4" stroke-linecap="round"/></svg>
<svg style="left:2520px;top:153px" width="24" height="24" viewBox="0 0 24 24"><path d="M12 2 H21 Q22 2 22 3 V12 L12 22 Q11 23 10 22 L2 14 Q1 13 2 12Z" fill="#4a8df0"/><circle cx="17.500" cy="6.500" r="1.800" fill="#fff"/></svg>
<svg style="left:2520px;top:205px" width="24" height="22" viewBox="0 0 24 22"><path d="M8 5 V3 Q8 1.500 9.500 1.500 H14.500 Q16 1.500 16 3 V5" fill="none" stroke="#e8551f" stroke-width="1.800"/><rect x="1" y="5" width="22" height="15" rx="2.500" fill="#f26a1b"/><rect x="1" y="5" width="22" height="6" rx="2" fill="#d8480f"/><rect x="10.500" y="9.500" width="3" height="4" rx="1" fill="#f8d8c0"/></svg>
<svg style="left:2520px;top:253px" width="24" height="25" viewBox="0 0 24 25"><circle cx="8" cy="9" r="3.500" fill="#c8c8c8"/><path d="M4.500 21 Q5 14 8 13 Q11 14 11.500 21Z" fill="#b8b8b8"/><rect x="2.500" y="20" width="11" height="3.500" rx="1" fill="#9a9a9a"/><path d="M14 2 H16 V4 H17.500 V2 H19.500 V4 H21 V2 H23 V8 L21.500 9.500 V15 L23 17.500 H14 L15.500 15 V9.500 L14 8Z" fill="#a070e8"/></svg>
<svg style="left:2520px;top:304px" width="24" height="24" viewBox="0 0 24 24"><path d="M12 1.500 L21 6.500 V17.500 L12 22.500 L3 17.500 V6.500Z" fill="#3a78e0"/><path d="M12 1.500 L21 6.500 V11 L12 7 L3 11 V6.500Z" fill="#58b0f8"/><path d="M3 13 L12 17.500 L21 13 V17.500 L12 22.500 L3 17.500Z" fill="#b060e0"/><circle cx="12" cy="12" r="3.500" fill="#3b3b3b"/></svg>
<svg style="left:2520px;top:354px" width="24" height="24" viewBox="0 0 24 24"><rect x="8" y="2" width="15" height="19" rx="2" fill="#28a8ea"/><path d="M8 12 L23 12 V19 Q23 21 21 21 H8Z" fill="#0a5fb0"/><rect x="1" y="6" width="13" height="13" rx="2" fill="#0f6cbd"/><circle cx="7.500" cy="12.500" r="3.300" fill="none" stroke="#fff" stroke-width="1.800"/></svg>
<svg style="left:2519px;top:404px" width="26" height="22" viewBox="0 0 26 22"><path d="M1 5 L25 1 L14 20 L11 11Z" fill="#2aa0ea"/><path d="M11 11 L25 1 L7.500 14.500 L8 20Z" fill="#1878c8"/></svg>
<div class="abs" style="left:2515px;top:447px;width:35px;height:1px;background:#5a5a5a"></div>
<svg style="left:2523px;top:486px" width="18" height="18" viewBox="0 0 18 18" stroke="#e8e8e8" stroke-width="1.400"><path d="M9 0 V18 M0 9 H18"/></svg>
<svg style="left:2521px;top:1296px" width="22" height="20" viewBox="0 0 22 20" fill="none" stroke="#e8e8e8" stroke-width="1.300"><rect x="1" y="1" width="20" height="14" rx="3" stroke-dasharray="3.500 2.500"/><path d="M8 8 L13.500 16.500 M14 8 L8.500 16.500"/><circle cx="7.500" cy="17.500" r="1.800"/><circle cx="14.500" cy="17.500" r="1.800"/></svg>
<div class="abs" style="left:2515px;top:1334px;width:34px;height:1px;background:#5a5a5a"></div>
<svg style="left:2521px;top:1350px" width="22" height="22" viewBox="0 0 24 24" fill="none" stroke="#fff" stroke-width="1.600"><circle cx="12" cy="12" r="3.300"/><path d="M10.300 2.500h3.400l.6 2.600 1.900.9 2.400-1.300 2.300 2.400-1.300 2.400.9 1.900 2.600.6v3.400l-2.600.6-.9 1.900 1.300 2.400-2.300 2.400-2.400-1.300-1.900.9-.6 2.600h-3.400l-.6-2.600-1.900-.9-2.400 1.300-2.400-2.400 1.300-2.400-.9-1.900-2.600-.6v-3.400l2.600-.6.9-1.900-1.300-2.400 2.400-2.400 2.400 1.300 1.900-.9z" transform="translate(1.200 1.200) scale(0.900)"/></svg>
<div class="abs" style="left:0;top:1386px;width:2505px;height:4px;background:#3b3b3b"></div>
</body></html>
